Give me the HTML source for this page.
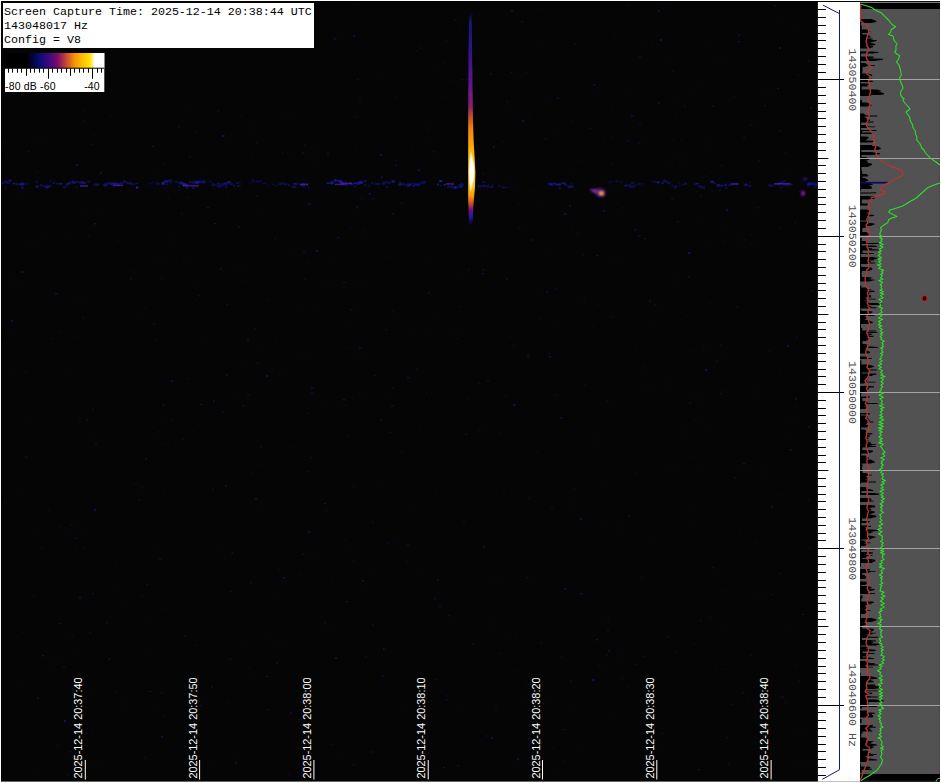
<!DOCTYPE html>
<html lang="en"><head><meta charset="utf-8"><title>Spectrogram capture</title>
<style>html,body{margin:0;padding:0;background:#fff;width:941px;height:783px;overflow:hidden}svg{display:block}.m{font-family:"Liberation Mono","DejaVu Sans Mono",monospace;font-size:11.667px}.s{font-family:"Liberation Sans","DejaVu Sans",sans-serif}</style></head><body>
<svg width="941" height="783" viewBox="0 0 941 783">
<defs>
<linearGradient id="cb" x1="0" y1="0" x2="1" y2="0">
<stop offset="0" stop-color="#000"/><stop offset="0.22" stop-color="#000"/><stop offset="0.28" stop-color="#04043a"/><stop offset="0.35" stop-color="#0a0a7a"/>
<stop offset="0.44" stop-color="#3a0a7a"/><stop offset="0.527" stop-color="#7a0a70"/><stop offset="0.61" stop-color="#c04438"/>
<stop offset="0.70" stop-color="#f89208"/><stop offset="0.78" stop-color="#ffbe00"/><stop offset="0.855" stop-color="#ffe400"/><stop offset="0.885" stop-color="#fff0a0"/><stop offset="0.905" stop-color="#fff"/><stop offset="1" stop-color="#fff"/>
</linearGradient>
<linearGradient id="st" gradientUnits="userSpaceOnUse" x1="0" y1="12" x2="0" y2="228">
<stop offset="0" stop-color="#0a0a40" stop-opacity="0"/>
<stop offset="0.04" stop-color="#16167a"/>
<stop offset="0.17" stop-color="#2a1488"/>
<stop offset="0.32" stop-color="#5a148a"/>
<stop offset="0.44" stop-color="#8a2070"/>
<stop offset="0.49" stop-color="#c8561e"/>
<stop offset="0.54" stop-color="#ee860e"/>
<stop offset="0.62" stop-color="#ffa60c"/>
<stop offset="0.68" stop-color="#ffc41c"/>
<stop offset="0.75" stop-color="#ffd030"/>
<stop offset="0.81" stop-color="#ffc21c"/>
<stop offset="0.85" stop-color="#ff9a08"/>
<stop offset="0.885" stop-color="#d0501e"/>
<stop offset="0.915" stop-color="#6a1488"/>
<stop offset="0.95" stop-color="#20189a"/>
<stop offset="1" stop-color="#0a0a40" stop-opacity="0"/>
</linearGradient>
<radialGradient id="bl"><stop offset="0" stop-color="#ffb010"/><stop offset="0.45" stop-color="#f08018"/><stop offset="0.75" stop-color="#8a1c80"/><stop offset="1" stop-color="#30107a" stop-opacity="0"/></radialGradient>
<radialGradient id="pd"><stop offset="0" stop-color="#b01890"/><stop offset="0.6" stop-color="#6a12a0"/><stop offset="1" stop-color="#20107a" stop-opacity="0"/></radialGradient>
<filter id="b1" x="-50%" y="-5%" width="200%" height="110%"><feGaussianBlur stdDeviation="0.7"/></filter>
<filter id="b2" x="-5%" y="-100%" width="110%" height="300%"><feGaussianBlur stdDeviation="0.75"/></filter>
<filter id="b4" x="0" y="0" width="100%" height="100%"><feGaussianBlur stdDeviation="0.45"/></filter>
<filter id="b3" x="-50%" y="-50%" width="200%" height="200%"><feGaussianBlur stdDeviation="0.8"/></filter>
</defs>
<rect x="0" y="0" width="941" height="783" fill="#fff"/>
<rect x="1" y="1" width="939" height="780.6" fill="#000"/>
<rect x="2.3" y="2" width="815.6" height="778.5" fill="#050505"/>
<path filter="url(#b4)" d="M197 424h2.5v1h-2.5zM604 522h2v1h-2zM83 109h2v2h-2zM437 319h2v1h-2zM517 767h2v1h-2zM652 321h1.5v1.5h-1.5zM350 325h1.5v1h-1.5zM813 243h1.5v1h-1.5zM773 754h2v1.5h-2zM563 760h2v1.5h-2zM353 560h2v2h-2zM643 766h1.5v2h-1.5zM503 492h2v2h-2zM552 748h2.5v1.5h-2.5zM484 251h2v1.5h-2zM618 655h2v2h-2zM409 509h2v1.5h-2zM660 746h2v1.5h-2zM721 352h1.5v1h-1.5zM279 643h2v1.5h-2zM345 404h2.5v1.5h-2.5zM750 124h2.5v2h-2.5zM412 189h2.5v1h-2.5zM765 477h2v1.5h-2zM791 422h2v1.5h-2zM164 417h2v1.5h-2zM645 716h1.5v2h-1.5zM513 670h2v1.5h-2zM266 637h2v1h-2zM794 664h2.5v1.5h-2.5zM316 305h2v1.5h-2zM159 258h2v1h-2zM584 298h2v1h-2zM509 337h2.5v1.5h-2.5zM186 105h2v1.5h-2zM789 436h1.5v2h-1.5zM598 439h1.5v2h-1.5zM120 602h1.5v1h-1.5zM538 294h2v1h-2zM394 542h2v1h-2zM708 143h2v1.5h-2zM302 310h2.5v1h-2.5zM525 697h2v1h-2zM114 585h2v1.5h-2zM694 419h2.5v1.5h-2.5zM724 241h2.5v2h-2.5zM167 444h2v2h-2zM696 191h2v1.5h-2zM156 548h2v1.5h-2zM100 208h1.5v1.5h-1.5zM370 571h1.5v1h-1.5zM445 96h1.5v2h-1.5zM95 689h1.5v1.5h-1.5zM91 733h1.5v2h-1.5zM416 50h2v1.5h-2zM92 436h2.5v1.5h-2.5zM528 357h2v1h-2zM85 213h2v1h-2zM769 350h2v2h-2zM690 91h1.5v1h-1.5zM461 706h2v1.5h-2zM168 197h1.5v2h-1.5zM165 608h1.5v2h-1.5zM382 73h1.5v1.5h-1.5zM699 468h1.5v1.5h-1.5zM812 162h2v2h-2zM570 175h1.5v1h-1.5zM359 356h2v1.5h-2zM692 350h2.5v1.5h-2.5zM789 625h2v1.5h-2zM697 416h2v1h-2zM142 316h1.5v1.5h-1.5zM686 315h2.5v1h-2.5zM404 706h2v1h-2zM319 151h1.5v1.5h-1.5zM799 731h2.5v1.5h-2.5zM459 27h2v1.5h-2zM80 531h1.5v1h-1.5zM48 509h2v2h-2zM279 374h1.5v2h-1.5zM681 431h2v2h-2zM39 137h2.5v1h-2.5zM618 527h2v1.5h-2zM491 623h1.5v2h-1.5zM5 154h2v1.5h-2zM530 190h2v1.5h-2zM478 13h2v1.5h-2zM383 484h1.5v1h-1.5zM700 82h1.5v1h-1.5zM621 677h2.5v2h-2.5zM281 152h2v2h-2zM288 773h2v2h-2zM360 198h2v1.5h-2zM780 18h1.5v1.5h-1.5zM798 680h2v2h-2zM779 227h2.5v1.5h-2.5zM722 627h2v1h-2zM16 490h1.5v1.5h-1.5zM797 31h2v1h-2zM228 702h1.5v2h-1.5zM34 773h2v1.5h-2zM230 134h2.5v1h-2.5zM424 136h1.5v1.5h-1.5zM472 112h2.5v2h-2.5zM260 465h2.5v1.5h-2.5zM231 552h1.5v2h-1.5zM162 715h2.5v2h-2.5zM260 213h2v1.5h-2zM499 433h2v2h-2zM207 761h2.5v1.5h-2.5zM515 635h2v1h-2zM446 40h2.5v1.5h-2.5zM121 703h2.5v2h-2.5zM528 114h2v1.5h-2zM256 505h2v1h-2zM428 121h2.5v1h-2.5zM355 144h2v1h-2zM110 116h2.5v1.5h-2.5zM764 470h1.5v1.5h-1.5zM811 761h1.5v1.5h-1.5zM446 695h2v2h-2zM248 667h2v1.5h-2zM236 758h2v1h-2zM492 175h2v1.5h-2zM356 210h2.5v1.5h-2.5zM195 299h1.5v1.5h-1.5zM739 533h2.5v1.5h-2.5zM28 420h2.5v1.5h-2.5zM675 651h2.5v1.5h-2.5zM671 466h2.5v1h-2.5zM362 586h1.5v1h-1.5zM526 685h2v1.5h-2zM529 744h1.5v1.5h-1.5zM469 70h2.5v2h-2.5zM52 338h2v2h-2zM710 171h2.5v1h-2.5zM756 391h2v1.5h-2zM615 256h2.5v1h-2.5zM196 287h2v1.5h-2zM172 239h2v1.5h-2zM513 345h1.5v2h-1.5zM401 451h2.5v2h-2.5zM810 377h1.5v2h-1.5zM287 117h2.5v1.5h-2.5zM671 161h2v1.5h-2zM347 435h2.5v2h-2.5zM304 144h2v2h-2zM582 254h2v2h-2zM144 308h2.5v1.5h-2.5zM767 94h2.5v1.5h-2.5zM467 398h2v1.5h-2zM84 547h2v2h-2zM675 114h2.5v1.5h-2.5zM796 336h2v2h-2zM353 5h2v1.5h-2zM350 227h2v1.5h-2zM69 529h1.5v1h-1.5zM217 545h1.5v1.5h-1.5zM557 325h1.5v1.5h-1.5zM424 257h1.5v1h-1.5zM512 345h1.5v1.5h-1.5zM163 443h2.5v1.5h-2.5zM427 333h1.5v1.5h-1.5zM647 390h2v1.5h-2zM301 775h1.5v2h-1.5zM13 370h1.5v2h-1.5zM666 383h2v1.5h-2zM785 152h2v2h-2zM59 526h2.5v1.5h-2.5zM610 163h2v2h-2zM779 372h2v1h-2zM541 774h2.5v1.5h-2.5zM325 400h1.5v1h-1.5zM486 735h2v2h-2zM356 116h2.5v2h-2.5zM260 346h2v1h-2zM794 222h2v2h-2zM202 175h2v1h-2zM274 238h2v2h-2zM5 502h2v1.5h-2zM668 59h2v1.5h-2zM239 270h2v1h-2zM470 23h2v1.5h-2zM635 473h2.5v1.5h-2.5zM395 97h2v2h-2zM229 658h2.5v2h-2.5zM64 239h1.5v1.5h-1.5zM146 618h2v1h-2zM183 261h1.5v2h-1.5zM418 728h2v2h-2zM607 483h1.5v1.5h-1.5zM573 503h2v2h-2zM115 567h2v1h-2zM194 131h2.5v2h-2.5zM276 596h2v1.5h-2zM580 160h2v1.5h-2zM4 141h2v2h-2zM551 96h2v1h-2zM700 405h2v1h-2zM717 61h2v1h-2zM388 256h2v1.5h-2zM613 181h2v1.5h-2zM457 274h2.5v1.5h-2.5zM343 286h2v1h-2zM560 656h2v1.5h-2zM153 705h2.5v1h-2.5zM756 541h2v2h-2zM298 573h2v2h-2zM612 316h2.5v2h-2.5zM79 296h2v1.5h-2zM673 279h2.5v2h-2.5zM129 270h2v1.5h-2zM721 590h2v1.5h-2zM204 700h1.5v1h-1.5zM536 451h2v1.5h-2zM456 338h2.5v1.5h-2.5zM704 42h1.5v1.5h-1.5zM163 178h2v1.5h-2zM141 595h2.5v2h-2.5zM721 390h2v1.5h-2zM508 639h1.5v1.5h-1.5zM715 665h2v1.5h-2zM455 333h2v1h-2zM359 392h1.5v2h-1.5zM66 370h2v1.5h-2zM667 636h2.5v2h-2.5zM241 647h2v1h-2zM21 281h1.5v1.5h-1.5zM583 301h2v1.5h-2zM777 494h2v1.5h-2zM144 757h2.5v2h-2.5zM606 400h2.5v2h-2.5zM577 233h2.5v2h-2.5zM21 681h2v1h-2zM639 123h2.5v2h-2.5zM311 556h2v1h-2zM700 195h2v2h-2zM643 40h1.5v1.5h-1.5zM145 650h2v1.5h-2zM306 261h2v2h-2zM73 650h2v1h-2zM711 190h2v1.5h-2zM163 494h2v1h-2zM643 722h2v2h-2zM635 345h2v1.5h-2zM251 157h1.5v2h-1.5zM541 43h2v1h-2zM743 239h2v2h-2zM553 770h2v1.5h-2zM193 760h2v1h-2zM700 222h2.5v1h-2.5zM537 201h1.5v1.5h-1.5zM603 138h1.5v2h-1.5zM528 497h2.5v2h-2.5zM558 133h1.5v1.5h-1.5zM244 280h2v1.5h-2zM129 189h2v1h-2zM411 146h2v1.5h-2zM287 153h2.5v1.5h-2.5zM288 253h1.5v1h-1.5zM672 140h2v1.5h-2zM546 249h2v1.5h-2zM241 364h2v1.5h-2zM673 97h1.5v1.5h-1.5zM628 4h2v2h-2zM327 281h2.5v1.5h-2.5zM695 392h2v1h-2zM416 369h2.5v2h-2.5zM571 228h2.5v1h-2.5zM726 62h2.5v1h-2.5zM31 245h2v1.5h-2zM227 196h2v1h-2zM663 6h2v1.5h-2zM331 580h2v1.5h-2zM250 675h2v1h-2zM693 506h2v1.5h-2zM317 159h2v1.5h-2zM614 37h2v1.5h-2zM478 429h2.5v2h-2.5zM570 707h1.5v2h-1.5zM445 699h1.5v1.5h-1.5zM747 700h1.5v2h-1.5zM797 74h2v2h-2zM36 535h1.5v1.5h-1.5zM705 424h1.5v1.5h-1.5zM495 578h2.5v1h-2.5zM808 499h2.5v2h-2.5zM25 371h2v2h-2zM809 547h2.5v2h-2.5zM22 632h2v1h-2zM435 488h2v1h-2zM416 368h2v2h-2zM67 774h2v2h-2zM789 172h1.5v1.5h-1.5zM256 142h2v2h-2zM419 428h2v1h-2zM327 630h2v1.5h-2zM511 106h1.5v1h-1.5zM252 127h2v2h-2zM332 258h2v1h-2zM44 234h2.5v1h-2.5zM95 766h2v1.5h-2zM157 172h2v1.5h-2zM692 457h2.5v1.5h-2.5zM281 581h2v1.5h-2zM518 203h2.5v1.5h-2.5zM812 61h2v1.5h-2zM240 116h2v1.5h-2zM653 755h2v1.5h-2zM349 545h2v1h-2zM597 87h1.5v2h-1.5zM578 747h1.5v2h-1.5zM340 752h2v1h-2zM446 699h2v2h-2zM76 336h2.5v1.5h-2.5zM13 279h2v2h-2zM83 120h2v2h-2zM234 393h2v1h-2zM438 773h2.5v1h-2.5zM653 541h1.5v1.5h-1.5zM539 317h2v2h-2zM17 192h1.5v1.5h-1.5zM695 527h1.5v1h-1.5zM680 140h2.5v1.5h-2.5zM554 394h2.5v2h-2.5zM75 550h2.5v1h-2.5zM592 325h2.5v1.5h-2.5zM293 446h2v1.5h-2zM409 334h1.5v1.5h-1.5zM348 347h2.5v1.5h-2.5zM627 686h2.5v1.5h-2.5zM750 234h2v1.5h-2zM13 330h2v1h-2zM622 207h2v1.5h-2zM724 226h1.5v1.5h-1.5zM556 289h2v1.5h-2zM799 763h2.5v1h-2.5zM325 509h2v2h-2zM716 360h2.5v2h-2.5zM303 354h2v1.5h-2zM488 184h2v1.5h-2zM538 8h2v1.5h-2zM799 191h1.5v1h-1.5zM420 571h1.5v1.5h-1.5zM353 485h2.5v2h-2.5zM158 431h2v1.5h-2zM609 712h1.5v1.5h-1.5zM759 596h2v1h-2z" fill="#12127a" opacity="0.22"/>
<path filter="url(#b4)" d="M495 706h2v1.5h-2zM159 558h2.5v2h-2.5zM324 622h2v1.5h-2zM635 664h2.5v1.5h-2.5zM785 702h1.5v1.5h-1.5zM55 663h1.5v1.5h-1.5zM310 457h2v1.5h-2zM781 696h2.5v2h-2.5zM709 302h1.5v1.5h-1.5zM796 406h2v1h-2zM290 712h2v2h-2zM89 632h2v1.5h-2zM433 151h2v1.5h-2zM518 228h2.5v1h-2.5zM725 669h2v1h-2zM222 411h1.5v2h-1.5zM306 471h2.5v1h-2.5zM345 540h1.5v1.5h-1.5zM181 213h1.5v2h-1.5zM33 596h2v1h-2zM453 81h1.5v1.5h-1.5zM308 186h2v2h-2zM808 60h1.5v2h-1.5zM705 246h1.5v1h-1.5zM275 341h1.5v1.5h-1.5zM526 577h2.5v1.5h-2.5zM554 288h2v1.5h-2zM91 144h2.5v1.5h-2.5zM463 521h2v1.5h-2zM700 620h2v1.5h-2zM726 737h2v1.5h-2zM628 515h2v2h-2zM505 395h1.5v1.5h-1.5zM407 544h2.5v1.5h-2.5zM530 239h2.5v2h-2.5zM93 134h2v1h-2zM574 43h1.5v2h-1.5zM251 473h1.5v1.5h-1.5zM153 323h2.5v1.5h-2.5zM439 605h2v2h-2zM182 438h2v1.5h-2zM634 229h2.5v2h-2.5zM171 420h2v1h-2zM639 56h2v1.5h-2zM302 152h2.5v2h-2.5zM728 763h1.5v1.5h-1.5zM162 164h2.5v1h-2.5zM88 235h2.5v1h-2.5zM257 362h2v1.5h-2zM774 5h2v1.5h-2zM256 195h2.5v1.5h-2.5zM606 654h2v1.5h-2zM731 704h2.5v1.5h-2.5zM808 426h2v2h-2zM372 624h2v1.5h-2zM693 643h2v1h-2zM546 291h2.5v2h-2.5zM353 764h2v1.5h-2zM380 419h2v2h-2zM679 159h2v1.5h-2zM684 105h1.5v2h-1.5zM502 141h1.5v1.5h-1.5zM709 617h2v1.5h-2zM79 421h2v1.5h-2zM482 173h2v1.5h-2zM434 679h2.5v1h-2.5zM60 332h2v1h-2zM420 47h1.5v2h-1.5zM597 305h2v1h-2zM247 394h2.5v1.5h-2.5zM721 165h2v1.5h-2zM557 97h2v2h-2zM117 241h2v1h-2zM649 300h2v2h-2zM226 304h2.5v1.5h-2.5zM468 269h2v1.5h-2zM506 278h2v2h-2zM146 584h2.5v1.5h-2.5zM184 635h2v2h-2zM278 569h2v1h-2zM703 349h1.5v1.5h-1.5zM395 160h2v1h-2zM86 419h2v2h-2zM810 107h2.5v2h-2.5zM212 489h2v1.5h-2zM654 304h2.5v1.5h-2.5zM178 126h1.5v2h-1.5zM260 446h2v1.5h-2zM82 317h2v1.5h-2zM359 101h2v1.5h-2zM434 598h2v1.5h-2zM71 524h1.5v2h-1.5zM458 306h2v1h-2zM211 686h2v2h-2zM736 306h2v1.5h-2zM189 156h1.5v2h-1.5zM593 84h2.5v2h-2.5zM311 392h2v2h-2zM482 269h2.5v1.5h-2.5zM372 198h2.5v1.5h-2.5zM472 643h2v2h-2zM454 19h2.5v1.5h-2.5zM392 387h1.5v2h-1.5zM138 499h2.5v1.5h-2.5zM607 618h2.5v1h-2.5zM652 42h1.5v1h-1.5zM108 658h2.5v2h-2.5zM200 705h2v1.5h-2zM332 744h2v1h-2zM771 506h2v2h-2zM75 537h2.5v2h-2.5zM5 343h1.5v1.5h-1.5zM638 142h2.5v1.5h-2.5zM390 397h1.5v1h-1.5zM372 521h1.5v2h-1.5zM304 278h2v1.5h-2zM217 110h2.5v1.5h-2.5zM428 292h2v2h-2zM506 101h2v1.5h-2zM743 137h2.5v1.5h-2.5zM428 129h2.5v1h-2.5zM161 278h2.5v1h-2.5zM629 93h1.5v1.5h-1.5zM266 299h2v1h-2zM41 547h2v1.5h-2zM187 378h1.5v1.5h-1.5zM133 483h1.5v1.5h-1.5zM540 685h2v1h-2zM106 622h1.5v2h-1.5zM96 185h2v1h-2zM232 552h1.5v2h-1.5zM478 382h1.5v2h-1.5zM712 567h2v1.5h-2zM162 404h2.5v2h-2.5zM574 488h1.5v1.5h-1.5zM69 751h2.5v1.5h-2.5zM391 405h2.5v2h-2.5zM71 635h2.5v1h-2.5zM392 311h1.5v1.5h-1.5zM370 751h2v2h-2zM205 340h1.5v1h-1.5zM712 105h2v2h-2zM426 392h1.5v1.5h-1.5zM142 487h1.5v1.5h-1.5zM811 290h2v1.5h-2zM569 205h2v2h-2zM570 680h1.5v2h-1.5zM689 402h2.5v1.5h-2.5zM733 96h1.5v1.5h-1.5zM589 128h2.5v1.5h-2.5zM198 295h2v1.5h-2zM25 456h2.5v2h-2.5zM671 198h2.5v1.5h-2.5zM471 201h1.5v1.5h-1.5zM364 231h1.5v1.5h-1.5zM521 21h2.5v1.5h-2.5zM540 642h2.5v1.5h-2.5zM302 553h1.5v2h-1.5zM490 73h2v2h-2zM551 508h2v1.5h-2zM548 353h2.5v1.5h-2.5zM307 413h2v1h-2zM250 582h2v1.5h-2zM757 207h2v1.5h-2zM611 107h1.5v1h-1.5zM389 432h2.5v1h-2.5zM498 653h2.5v1h-2.5zM130 278h2v1.5h-2zM672 70h2v1.5h-2zM771 594h2.5v1h-2.5zM598 665h2.5v1h-2.5zM607 630h2v1.5h-2zM92 409h2v1.5h-2zM542 703h2.5v1.5h-2.5zM401 202h2v1.5h-2zM461 79h2.5v1.5h-2.5zM584 384h1.5v1h-1.5zM719 189h2v2h-2zM571 121h2v1.5h-2zM644 367h1.5v1.5h-1.5zM36 171h2.5v1h-2.5zM466 79h2v1.5h-2zM487 380h2v2h-2zM57 745h2.5v1h-2.5zM178 189h2v1.5h-2zM37 697h2v2h-2zM276 662h2v2h-2zM146 185h1.5v1h-1.5zM230 591h2v1h-2zM627 140h2v1.5h-2zM758 160h2v1.5h-2zM238 226h2v2h-2zM738 34h2v2h-2zM443 62h2.5v1h-2.5zM385 329h2.5v1.5h-2.5zM779 130h2.5v1.5h-2.5zM734 477h1.5v2h-1.5zM448 615h2v1.5h-2zM70 724h1.5v1.5h-1.5zM186 197h2.5v1h-2.5zM406 561h2v1h-2zM720 344h1.5v1.5h-1.5zM525 72h1.5v1.5h-1.5zM350 309h2.5v1.5h-2.5zM63 666h2v2h-2zM359 286h1.5v1h-1.5zM643 656h2v1h-2zM720 393h2v1.5h-2zM254 328h2v1.5h-2zM213 400h2v2h-2zM611 137h2.5v1h-2.5zM220 268h2v2h-2zM641 577h1.5v1.5h-1.5zM437 68h1.5v1h-1.5zM365 656h2v1.5h-2zM374 375h2v1h-2zM164 188h2v1h-2zM196 645h2v1h-2z" fill="#12127a" opacity="0.38"/>
<path filter="url(#b4)" d="M522 120h2v2h-2zM705 369h2.5v2h-2.5zM698 769h2v1.5h-2zM156 340h1.5v1h-1.5zM491 737h2v2h-2zM457 765h2v1h-2zM608 650h2v1.5h-2zM660 39h2v2h-2zM471 14h1.5v1.5h-1.5zM563 729h2.5v1h-2.5zM527 355h2.5v1.5h-2.5zM564 588h2.5v1.5h-2.5zM407 377h2.5v1.5h-2.5zM631 115h2.5v1.5h-2.5zM383 648h1.5v2h-1.5zM742 692h1.5v1.5h-1.5zM149 691h2.5v1h-2.5zM392 213h2v1.5h-2zM517 758h2v2h-2zM28 151h1.5v1h-1.5zM94 223h2v1.5h-2zM266 676h2v1h-2zM335 657h2v2h-2zM743 463h2v1.5h-2zM359 347h2.5v1.5h-2.5zM222 135h2.5v2h-2.5zM382 675h2v1.5h-2zM381 176h1.5v2h-1.5zM592 679h2.5v2h-2.5zM242 405h2.5v1h-2.5zM283 577h2v1.5h-2zM171 380h2v2h-2zM779 573h1.5v1h-1.5zM21 271h2.5v2h-2.5zM483 546h2v1.5h-2zM357 79h1.5v1h-1.5zM267 709h1.5v1.5h-1.5zM235 762h2v1.5h-2zM207 207h2v1h-2zM395 165h2v1.5h-2zM443 767h2v1h-2zM226 374h2v1.5h-2zM356 206h2v1.5h-2zM802 614h2v1h-2zM100 172h1.5v2h-1.5zM513 404h2.5v2h-2.5zM59 623h2.5v1h-2.5zM738 41h2v1.5h-2zM511 72h1.5v1h-1.5zM266 375h2v2h-2zM316 250h2v2h-2zM353 35h2.5v1.5h-2.5zM324 503h2v1h-2zM161 692h1.5v1.5h-1.5zM751 244h1.5v1h-1.5zM346 601h2v1.5h-2zM387 542h1.5v1.5h-1.5zM92 593h1.5v1.5h-1.5zM677 221h2v1h-2zM64 720h2v2h-2zM511 10h2v2h-2zM437 579h2v1.5h-2zM750 654h1.5v1.5h-1.5zM334 38h2.5v1.5h-2.5zM596 639h2v1.5h-2zM337 237h2.5v1h-2.5zM380 154h2v2h-2zM482 273h2v1.5h-2zM152 146h2v1h-2zM790 449h2v1.5h-2zM688 276h1.5v1.5h-1.5zM638 235h2.5v1.5h-2.5zM644 238h2v1h-2zM311 387h2.5v1.5h-2.5zM115 691h1.5v1h-1.5zM369 193h2v1.5h-2zM95 444h2v1h-2zM255 498h2v2h-2zM94 509h2v2h-2zM545 138h1.5v1.5h-1.5zM795 398h2v1.5h-2zM225 485h1.5v2h-1.5zM11 320h2.5v1.5h-2.5zM79 597h2v1.5h-2zM764 105h1.5v1.5h-1.5zM560 417h2v1.5h-2zM658 102h2v1.5h-2zM343 282h2.5v1h-2.5zM580 593h2.5v1.5h-2.5zM779 47h2v2h-2zM308 203h2.5v2h-2.5zM596 255h2.5v1h-2.5zM549 356h2v1.5h-2zM726 209h2v2h-2zM200 404h2v1h-2zM564 213h2.5v2h-2.5zM493 146h1.5v2h-1.5zM308 531h2v2h-2zM327 153h2v1.5h-2zM42 655h2v1.5h-2zM580 518h2v2h-2zM362 580h2v1.5h-2zM214 223h2v1h-2zM193 775h2v1h-2zM777 88h2v1h-2zM658 10h1.5v2h-1.5zM603 210h2v2h-2zM303 251h2.5v1h-2.5zM161 736h2v1.5h-2zM55 293h2.5v1.5h-2.5zM145 458h2v1.5h-2zM661 733h1.5v1h-1.5zM787 345h2v2h-2zM688 252h2.5v2h-2.5zM76 164h2v2h-2zM343 399h2v1.5h-2zM247 339h2v1.5h-2zM465 434h2v1h-2zM418 169h2v2h-2z" fill="#12127a" opacity="0.6"/>
<g filter="url(#b2)"><ellipse cx="3.0" cy="182.9" rx="1.8" ry="1.3" fill="#181890" opacity="0.46"/><ellipse cx="6.0" cy="181.6" rx="1.8" ry="1.3" fill="#1a1aa6" opacity="0.47"/><ellipse cx="5.9" cy="187.6" rx="1.3" ry="1.0" fill="#1818a0" opacity="0.37"/><ellipse cx="8.2" cy="182.5" rx="2.0" ry="1.5" fill="#181890" opacity="0.56"/><ellipse cx="10.1" cy="180.5" rx="1.6" ry="1.2" fill="#1a1aa6" opacity="0.58"/><ellipse cx="14.1" cy="183.5" rx="1.4" ry="1.0" fill="#1a1aa6" opacity="0.72"/><ellipse cx="17.2" cy="184.0" rx="1.6" ry="1.2" fill="#1616a0" opacity="0.58"/><ellipse cx="20.2" cy="184.3" rx="1.5" ry="1.1" fill="#1a1aa6" opacity="0.66"/><ellipse cx="20.8" cy="184.1" rx="1.1" ry="0.8" fill="#1818a0" opacity="0.53"/><ellipse cx="22.4" cy="183.9" rx="2.3" ry="1.6" fill="#181890" opacity="0.76"/><ellipse cx="22.4" cy="187.8" rx="1.6" ry="1.3" fill="#1818a0" opacity="0.61"/><ellipse cx="27.0" cy="183.8" rx="1.4" ry="1.0" fill="#181890" opacity="0.45"/><ellipse cx="27.2" cy="181.0" rx="1.0" ry="0.8" fill="#1818a0" opacity="0.36"/><ellipse cx="37.0" cy="186.6" rx="1.6" ry="1.2" fill="#1a1aa6" opacity="0.71"/><ellipse cx="36.7" cy="181.8" rx="1.2" ry="0.9" fill="#1818a0" opacity="0.57"/><ellipse cx="41.0" cy="184.9" rx="1.6" ry="1.1" fill="#1a1aa6" opacity="0.36"/><ellipse cx="43.2" cy="186.2" rx="1.7" ry="1.2" fill="#1a1aa6" opacity="0.38"/><ellipse cx="47.2" cy="186.9" rx="2.4" ry="1.7" fill="#1a1aa6" opacity="0.70"/><ellipse cx="50.2" cy="185.8" rx="1.7" ry="1.2" fill="#1616a0" opacity="0.42"/><ellipse cx="50.8" cy="181.0" rx="1.2" ry="1.0" fill="#1818a0" opacity="0.34"/><ellipse cx="53.8" cy="182.9" rx="1.3" ry="0.9" fill="#2020b4" opacity="0.42"/><ellipse cx="53.6" cy="182.4" rx="0.9" ry="0.8" fill="#1818a0" opacity="0.34"/><ellipse cx="57.7" cy="183.6" rx="2.0" ry="1.4" fill="#1616a0" opacity="0.38"/><ellipse cx="60.7" cy="183.7" rx="1.8" ry="1.3" fill="#1a1aa6" opacity="0.61"/><ellipse cx="64.6" cy="187.2" rx="1.7" ry="1.2" fill="#2020b4" opacity="0.38"/><ellipse cx="67.5" cy="184.1" rx="1.6" ry="1.1" fill="#2020b4" opacity="0.53"/><ellipse cx="67.2" cy="186.0" rx="1.1" ry="0.9" fill="#1818a0" opacity="0.43"/><ellipse cx="69.6" cy="182.9" rx="2.1" ry="1.5" fill="#2020b4" opacity="0.43"/><ellipse cx="73.4" cy="182.5" rx="1.7" ry="1.2" fill="#1616a0" opacity="0.70"/><ellipse cx="72.6" cy="181.2" rx="1.2" ry="1.0" fill="#1818a0" opacity="0.56"/><ellipse cx="75.3" cy="182.5" rx="1.8" ry="1.3" fill="#1a1aa6" opacity="0.38"/><ellipse cx="77.4" cy="181.9" rx="1.8" ry="1.3" fill="#1616a0" opacity="0.41"/><ellipse cx="76.8" cy="187.0" rx="1.3" ry="1.0" fill="#1818a0" opacity="0.33"/><ellipse cx="81.0" cy="182.4" rx="2.1" ry="1.5" fill="#1a1aa6" opacity="0.56"/><ellipse cx="82.8" cy="182.5" rx="2.1" ry="1.5" fill="#1616a0" opacity="0.39"/><ellipse cx="82.4" cy="185.8" rx="1.5" ry="1.2" fill="#1818a0" opacity="0.31"/><ellipse cx="84.7" cy="183.1" rx="1.7" ry="1.2" fill="#2020b4" opacity="0.44"/><ellipse cx="88.4" cy="181.8" rx="1.9" ry="1.3" fill="#2020b4" opacity="0.34"/><ellipse cx="95.0" cy="184.5" rx="1.8" ry="1.3" fill="#1a1aa6" opacity="0.41"/><ellipse cx="97.6" cy="184.6" rx="2.0" ry="1.4" fill="#1a1aa6" opacity="0.37"/><ellipse cx="105.0" cy="185.0" rx="2.4" ry="1.7" fill="#1a1aa6" opacity="0.59"/><ellipse cx="108.5" cy="183.2" rx="2.2" ry="1.6" fill="#1a1aa6" opacity="0.39"/><ellipse cx="108.0" cy="183.8" rx="1.6" ry="1.3" fill="#1818a0" opacity="0.31"/><ellipse cx="112.0" cy="183.8" rx="2.2" ry="1.6" fill="#181890" opacity="0.69"/><ellipse cx="114.7" cy="183.5" rx="2.3" ry="1.6" fill="#1a1aa6" opacity="0.65"/><ellipse cx="117.7" cy="184.6" rx="2.1" ry="1.5" fill="#181890" opacity="0.76"/><ellipse cx="121.3" cy="183.2" rx="2.0" ry="1.5" fill="#1616a0" opacity="0.67"/><ellipse cx="124.3" cy="181.3" rx="1.6" ry="1.1" fill="#1a1aa6" opacity="0.53"/><ellipse cx="125.1" cy="182.0" rx="1.1" ry="0.9" fill="#1818a0" opacity="0.43"/><ellipse cx="127.9" cy="182.9" rx="1.8" ry="1.3" fill="#181890" opacity="0.64"/><ellipse cx="130.8" cy="183.8" rx="1.4" ry="1.0" fill="#181890" opacity="0.79"/><ellipse cx="131.1" cy="183.0" rx="1.0" ry="0.8" fill="#1818a0" opacity="0.63"/><ellipse cx="134.2" cy="183.7" rx="1.6" ry="1.2" fill="#1616a0" opacity="0.47"/><ellipse cx="137.2" cy="187.1" rx="1.5" ry="1.1" fill="#181890" opacity="0.67"/><ellipse cx="137.0" cy="183.5" rx="1.1" ry="0.9" fill="#1818a0" opacity="0.54"/><ellipse cx="150.0" cy="183.4" rx="2.0" ry="1.4" fill="#1616a0" opacity="0.27"/><ellipse cx="150.9" cy="186.7" rx="1.4" ry="1.1" fill="#1818a0" opacity="0.22"/><ellipse cx="153.5" cy="182.0" rx="1.3" ry="0.9" fill="#1a1aa6" opacity="0.39"/><ellipse cx="153.4" cy="183.9" rx="0.9" ry="0.7" fill="#1818a0" opacity="0.31"/><ellipse cx="157.7" cy="183.4" rx="2.3" ry="1.7" fill="#2020b4" opacity="0.30"/><ellipse cx="163.0" cy="183.3" rx="2.1" ry="1.5" fill="#1a1aa6" opacity="0.73"/><ellipse cx="163.8" cy="183.7" rx="1.5" ry="1.2" fill="#1818a0" opacity="0.58"/><ellipse cx="165.4" cy="181.5" rx="1.9" ry="1.4" fill="#1a1aa6" opacity="0.57"/><ellipse cx="167.4" cy="181.2" rx="1.7" ry="1.2" fill="#1616a0" opacity="0.73"/><ellipse cx="167.4" cy="184.3" rx="1.2" ry="1.0" fill="#1818a0" opacity="0.59"/><ellipse cx="170.4" cy="180.5" rx="2.0" ry="1.4" fill="#1616a0" opacity="0.43"/><ellipse cx="170.7" cy="182.8" rx="1.4" ry="1.2" fill="#1818a0" opacity="0.34"/><ellipse cx="174.4" cy="181.5" rx="1.3" ry="1.0" fill="#1a1aa6" opacity="0.39"/><ellipse cx="176.6" cy="182.3" rx="1.3" ry="0.9" fill="#181890" opacity="0.58"/><ellipse cx="177.5" cy="181.3" rx="0.9" ry="0.7" fill="#1818a0" opacity="0.47"/><ellipse cx="179.7" cy="183.3" rx="1.7" ry="1.2" fill="#181890" opacity="0.67"/><ellipse cx="179.2" cy="186.8" rx="1.2" ry="1.0" fill="#1818a0" opacity="0.54"/><ellipse cx="181.6" cy="182.7" rx="2.0" ry="1.4" fill="#2020b4" opacity="0.44"/><ellipse cx="183.8" cy="184.4" rx="2.2" ry="1.6" fill="#2020b4" opacity="0.72"/><ellipse cx="186.1" cy="184.9" rx="1.9" ry="1.3" fill="#2020b4" opacity="0.77"/><ellipse cx="187.0" cy="187.7" rx="1.3" ry="1.1" fill="#1818a0" opacity="0.62"/><ellipse cx="189.8" cy="181.9" rx="1.3" ry="0.9" fill="#2020b4" opacity="0.52"/><ellipse cx="193.5" cy="182.2" rx="2.3" ry="1.6" fill="#181890" opacity="0.60"/><ellipse cx="193.6" cy="188.1" rx="1.6" ry="1.3" fill="#1818a0" opacity="0.48"/><ellipse cx="197.1" cy="182.2" rx="2.1" ry="1.5" fill="#2020b4" opacity="0.76"/><ellipse cx="199.5" cy="181.9" rx="2.0" ry="1.4" fill="#1616a0" opacity="0.75"/><ellipse cx="203.5" cy="181.9" rx="2.3" ry="1.7" fill="#1616a0" opacity="0.70"/><ellipse cx="210.0" cy="181.4" rx="1.6" ry="1.1" fill="#181890" opacity="0.38"/><ellipse cx="212.9" cy="185.2" rx="1.8" ry="1.3" fill="#1616a0" opacity="0.40"/><ellipse cx="212.7" cy="183.8" rx="1.3" ry="1.0" fill="#1818a0" opacity="0.32"/><ellipse cx="215.9" cy="184.8" rx="1.8" ry="1.3" fill="#2020b4" opacity="0.33"/><ellipse cx="219.6" cy="186.2" rx="2.1" ry="1.5" fill="#1616a0" opacity="0.61"/><ellipse cx="218.6" cy="183.5" rx="1.5" ry="1.2" fill="#1818a0" opacity="0.49"/><ellipse cx="223.0" cy="184.2" rx="2.4" ry="1.7" fill="#1616a0" opacity="0.40"/><ellipse cx="226.1" cy="183.4" rx="2.1" ry="1.5" fill="#1a1aa6" opacity="0.59"/><ellipse cx="226.1" cy="186.8" rx="1.5" ry="1.2" fill="#1818a0" opacity="0.47"/><ellipse cx="229.0" cy="182.2" rx="1.9" ry="1.4" fill="#2020b4" opacity="0.60"/><ellipse cx="231.7" cy="184.0" rx="1.5" ry="1.1" fill="#1a1aa6" opacity="0.63"/><ellipse cx="234.0" cy="185.7" rx="1.3" ry="1.0" fill="#1616a0" opacity="0.44"/><ellipse cx="233.6" cy="186.8" rx="1.0" ry="0.8" fill="#1818a0" opacity="0.35"/><ellipse cx="237.5" cy="183.0" rx="1.6" ry="1.1" fill="#1616a0" opacity="0.41"/><ellipse cx="237.5" cy="186.4" rx="1.1" ry="0.9" fill="#1818a0" opacity="0.33"/><ellipse cx="239.3" cy="185.8" rx="1.8" ry="1.3" fill="#1616a0" opacity="0.32"/><ellipse cx="240.0" cy="182.5" rx="1.3" ry="1.1" fill="#1818a0" opacity="0.26"/><ellipse cx="250.0" cy="182.7" rx="1.9" ry="1.4" fill="#1616a0" opacity="0.23"/><ellipse cx="252.9" cy="180.5" rx="1.7" ry="1.2" fill="#2020b4" opacity="0.25"/><ellipse cx="252.8" cy="183.6" rx="1.2" ry="1.0" fill="#1818a0" opacity="0.20"/><ellipse cx="256.2" cy="181.2" rx="2.1" ry="1.5" fill="#181890" opacity="0.24"/><ellipse cx="258.1" cy="181.2" rx="1.5" ry="1.1" fill="#1a1aa6" opacity="0.24"/><ellipse cx="257.1" cy="181.7" rx="1.1" ry="0.9" fill="#1818a0" opacity="0.19"/><ellipse cx="260.5" cy="181.0" rx="2.0" ry="1.5" fill="#1a1aa6" opacity="0.19"/><ellipse cx="262.8" cy="182.8" rx="1.4" ry="1.0" fill="#1616a0" opacity="0.24"/><ellipse cx="264.9" cy="183.3" rx="1.7" ry="1.2" fill="#1616a0" opacity="0.27"/><ellipse cx="267.2" cy="185.8" rx="1.5" ry="1.1" fill="#1616a0" opacity="0.24"/><ellipse cx="267.8" cy="184.9" rx="1.1" ry="0.9" fill="#1818a0" opacity="0.19"/><ellipse cx="273.0" cy="184.6" rx="1.3" ry="0.9" fill="#2020b4" opacity="0.30"/><ellipse cx="276.4" cy="185.5" rx="1.9" ry="1.4" fill="#181890" opacity="0.23"/><ellipse cx="279.6" cy="184.2" rx="1.5" ry="1.0" fill="#1a1aa6" opacity="0.47"/><ellipse cx="282.1" cy="183.3" rx="2.2" ry="1.6" fill="#2020b4" opacity="0.30"/><ellipse cx="285.4" cy="183.8" rx="1.7" ry="1.2" fill="#1a1aa6" opacity="0.44"/><ellipse cx="285.4" cy="184.9" rx="1.2" ry="1.0" fill="#1818a0" opacity="0.35"/><ellipse cx="289.2" cy="185.3" rx="1.6" ry="1.1" fill="#2020b4" opacity="0.33"/><ellipse cx="292.1" cy="186.6" rx="1.5" ry="1.1" fill="#181890" opacity="0.32"/><ellipse cx="294.1" cy="186.8" rx="2.2" ry="1.6" fill="#1a1aa6" opacity="0.42"/><ellipse cx="295.0" cy="183.7" rx="1.5" ry="1.0" fill="#181890" opacity="0.77"/><ellipse cx="297.2" cy="184.0" rx="2.3" ry="1.7" fill="#1616a0" opacity="0.37"/><ellipse cx="301.3" cy="184.9" rx="1.5" ry="1.1" fill="#181890" opacity="0.52"/><ellipse cx="302.1" cy="185.8" rx="1.1" ry="0.9" fill="#1818a0" opacity="0.42"/><ellipse cx="303.5" cy="184.2" rx="1.7" ry="1.2" fill="#1616a0" opacity="0.77"/><ellipse cx="303.9" cy="186.2" rx="1.2" ry="1.0" fill="#1818a0" opacity="0.61"/><ellipse cx="307.1" cy="184.8" rx="1.3" ry="1.0" fill="#2020b4" opacity="0.39"/><ellipse cx="308.1" cy="183.4" rx="1.0" ry="0.8" fill="#1818a0" opacity="0.31"/><ellipse cx="328.0" cy="183.2" rx="1.6" ry="1.1" fill="#1616a0" opacity="0.80"/><ellipse cx="331.9" cy="182.8" rx="2.3" ry="1.6" fill="#1616a0" opacity="0.81"/><ellipse cx="335.4" cy="180.5" rx="2.0" ry="1.4" fill="#2020b4" opacity="0.62"/><ellipse cx="338.4" cy="180.9" rx="1.3" ry="0.9" fill="#1a1aa6" opacity="0.76"/><ellipse cx="338.4" cy="181.3" rx="0.9" ry="0.8" fill="#1818a0" opacity="0.61"/><ellipse cx="340.4" cy="181.5" rx="1.9" ry="1.4" fill="#2020b4" opacity="0.73"/><ellipse cx="340.9" cy="183.5" rx="1.4" ry="1.1" fill="#1818a0" opacity="0.58"/><ellipse cx="342.5" cy="183.1" rx="1.7" ry="1.2" fill="#2020b4" opacity="0.75"/><ellipse cx="346.5" cy="184.2" rx="1.7" ry="1.2" fill="#2020b4" opacity="0.66"/><ellipse cx="345.6" cy="181.7" rx="1.2" ry="0.9" fill="#1818a0" opacity="0.53"/><ellipse cx="350.2" cy="183.5" rx="1.4" ry="1.0" fill="#1a1aa6" opacity="0.88"/><ellipse cx="349.6" cy="183.1" rx="1.0" ry="0.8" fill="#1818a0" opacity="0.71"/><ellipse cx="352.0" cy="184.0" rx="1.9" ry="1.4" fill="#1616a0" opacity="0.68"/><ellipse cx="355.3" cy="183.3" rx="1.4" ry="1.0" fill="#1a1aa6" opacity="0.78"/><ellipse cx="355.1" cy="186.1" rx="1.0" ry="0.8" fill="#1818a0" opacity="0.62"/><ellipse cx="357.9" cy="183.5" rx="2.2" ry="1.5" fill="#1a1aa6" opacity="0.55"/><ellipse cx="357.5" cy="182.9" rx="1.5" ry="1.2" fill="#1818a0" opacity="0.44"/><ellipse cx="360.7" cy="182.4" rx="2.2" ry="1.6" fill="#1a1aa6" opacity="0.90"/><ellipse cx="364.7" cy="181.0" rx="2.3" ry="1.6" fill="#181890" opacity="0.49"/><ellipse cx="365.0" cy="185.1" rx="1.4" ry="1.0" fill="#181890" opacity="0.45"/><ellipse cx="369.0" cy="186.0" rx="2.0" ry="1.4" fill="#1a1aa6" opacity="0.24"/><ellipse cx="372.1" cy="182.9" rx="2.1" ry="1.5" fill="#1a1aa6" opacity="0.24"/><ellipse cx="376.3" cy="183.9" rx="1.7" ry="1.2" fill="#181890" opacity="0.54"/><ellipse cx="379.2" cy="183.9" rx="1.6" ry="1.1" fill="#1616a0" opacity="0.41"/><ellipse cx="378.5" cy="187.5" rx="1.1" ry="0.9" fill="#1818a0" opacity="0.33"/><ellipse cx="383.2" cy="183.1" rx="2.1" ry="1.5" fill="#1a1aa6" opacity="0.36"/><ellipse cx="384.1" cy="184.4" rx="1.5" ry="1.2" fill="#1818a0" opacity="0.29"/><ellipse cx="386.6" cy="182.1" rx="2.3" ry="1.6" fill="#181890" opacity="0.38"/><ellipse cx="386.9" cy="186.9" rx="1.6" ry="1.3" fill="#1818a0" opacity="0.30"/><ellipse cx="389.5" cy="183.0" rx="1.6" ry="1.2" fill="#181890" opacity="0.42"/><ellipse cx="393.1" cy="181.4" rx="2.0" ry="1.4" fill="#2020b4" opacity="0.52"/><ellipse cx="393.2" cy="181.9" rx="1.4" ry="1.1" fill="#1818a0" opacity="0.41"/><ellipse cx="400.0" cy="184.4" rx="2.2" ry="1.6" fill="#2020b4" opacity="0.45"/><ellipse cx="400.7" cy="182.5" rx="1.6" ry="1.3" fill="#1818a0" opacity="0.36"/><ellipse cx="403.3" cy="184.1" rx="2.0" ry="1.4" fill="#2020b4" opacity="0.32"/><ellipse cx="405.3" cy="184.9" rx="1.3" ry="0.9" fill="#1616a0" opacity="0.55"/><ellipse cx="408.8" cy="184.7" rx="2.4" ry="1.7" fill="#181890" opacity="0.58"/><ellipse cx="408.6" cy="185.8" rx="1.7" ry="1.4" fill="#1818a0" opacity="0.46"/><ellipse cx="410.6" cy="184.3" rx="1.5" ry="1.1" fill="#2020b4" opacity="0.51"/><ellipse cx="413.9" cy="185.5" rx="2.2" ry="1.6" fill="#1616a0" opacity="0.45"/><ellipse cx="413.7" cy="183.3" rx="1.6" ry="1.3" fill="#1818a0" opacity="0.36"/><ellipse cx="416.5" cy="184.7" rx="2.0" ry="1.4" fill="#1616a0" opacity="0.61"/><ellipse cx="418.6" cy="184.8" rx="2.0" ry="1.4" fill="#1616a0" opacity="0.60"/><ellipse cx="420.8" cy="182.9" rx="2.0" ry="1.4" fill="#1a1aa6" opacity="0.31"/><ellipse cx="423.8" cy="182.2" rx="2.2" ry="1.6" fill="#1616a0" opacity="0.49"/><ellipse cx="438.0" cy="184.6" rx="1.4" ry="1.0" fill="#181890" opacity="0.74"/><ellipse cx="440.9" cy="181.0" rx="1.7" ry="1.2" fill="#2020b4" opacity="0.75"/><ellipse cx="441.2" cy="185.6" rx="1.2" ry="1.0" fill="#1818a0" opacity="0.60"/><ellipse cx="444.7" cy="184.9" rx="1.3" ry="0.9" fill="#2020b4" opacity="0.75"/><ellipse cx="448.4" cy="186.9" rx="1.8" ry="1.3" fill="#181890" opacity="0.38"/><ellipse cx="449.2" cy="186.3" rx="1.3" ry="1.0" fill="#1818a0" opacity="0.30"/><ellipse cx="451.6" cy="187.0" rx="1.4" ry="1.0" fill="#181890" opacity="0.70"/><ellipse cx="452.2" cy="185.5" rx="1.0" ry="0.8" fill="#1818a0" opacity="0.56"/><ellipse cx="455.2" cy="187.5" rx="2.3" ry="1.6" fill="#181890" opacity="0.68"/><ellipse cx="455.7" cy="187.4" rx="1.6" ry="1.3" fill="#1818a0" opacity="0.54"/><ellipse cx="458.8" cy="185.7" rx="1.6" ry="1.1" fill="#181890" opacity="0.58"/><ellipse cx="459.2" cy="187.6" rx="1.1" ry="0.9" fill="#1818a0" opacity="0.47"/><ellipse cx="461.6" cy="184.8" rx="2.3" ry="1.6" fill="#1616a0" opacity="0.72"/><ellipse cx="461.2" cy="186.9" rx="1.6" ry="1.3" fill="#1818a0" opacity="0.57"/><ellipse cx="480.0" cy="186.2" rx="2.4" ry="1.7" fill="#1a1aa6" opacity="0.35"/><ellipse cx="484.1" cy="185.9" rx="1.8" ry="1.3" fill="#181890" opacity="0.64"/><ellipse cx="483.6" cy="182.2" rx="1.3" ry="1.0" fill="#1818a0" opacity="0.51"/><ellipse cx="487.8" cy="186.5" rx="2.3" ry="1.6" fill="#181890" opacity="0.40"/><ellipse cx="491.9" cy="187.1" rx="1.8" ry="1.3" fill="#1616a0" opacity="0.52"/><ellipse cx="492.8" cy="185.2" rx="1.3" ry="1.0" fill="#1818a0" opacity="0.41"/><ellipse cx="500.0" cy="185.5" rx="1.5" ry="1.1" fill="#1a1aa6" opacity="0.32"/><ellipse cx="499.1" cy="186.0" rx="1.1" ry="0.9" fill="#1818a0" opacity="0.26"/><ellipse cx="503.2" cy="187.3" rx="1.9" ry="1.4" fill="#1a1aa6" opacity="0.31"/><ellipse cx="505.7" cy="187.5" rx="1.6" ry="1.1" fill="#1a1aa6" opacity="0.36"/><ellipse cx="509.5" cy="187.5" rx="1.5" ry="1.1" fill="#181890" opacity="0.26"/><ellipse cx="510.5" cy="181.0" rx="1.1" ry="0.9" fill="#1818a0" opacity="0.21"/><ellipse cx="513.1" cy="186.7" rx="2.3" ry="1.6" fill="#181890" opacity="0.17"/><ellipse cx="550.0" cy="184.1" rx="2.1" ry="1.5" fill="#1a1aa6" opacity="0.60"/><ellipse cx="552.4" cy="183.9" rx="2.1" ry="1.5" fill="#1a1aa6" opacity="0.44"/><ellipse cx="551.8" cy="185.0" rx="1.5" ry="1.2" fill="#1818a0" opacity="0.35"/><ellipse cx="554.3" cy="183.7" rx="1.6" ry="1.1" fill="#181890" opacity="0.66"/><ellipse cx="556.7" cy="184.4" rx="1.7" ry="1.2" fill="#1a1aa6" opacity="0.58"/><ellipse cx="559.3" cy="184.5" rx="1.8" ry="1.3" fill="#2020b4" opacity="0.63"/><ellipse cx="559.8" cy="187.9" rx="1.3" ry="1.0" fill="#1818a0" opacity="0.51"/><ellipse cx="561.9" cy="183.3" rx="1.3" ry="0.9" fill="#181890" opacity="0.64"/><ellipse cx="564.1" cy="183.3" rx="1.9" ry="1.3" fill="#2020b4" opacity="0.51"/><ellipse cx="566.1" cy="184.7" rx="1.4" ry="1.0" fill="#1616a0" opacity="0.68"/><ellipse cx="569.4" cy="186.8" rx="2.2" ry="1.6" fill="#2020b4" opacity="0.40"/><ellipse cx="572.0" cy="186.5" rx="1.6" ry="1.2" fill="#2020b4" opacity="0.49"/><ellipse cx="571.4" cy="183.4" rx="1.2" ry="0.9" fill="#1818a0" opacity="0.39"/><ellipse cx="608.0" cy="183.1" rx="2.2" ry="1.6" fill="#1a1aa6" opacity="0.17"/><ellipse cx="610.4" cy="181.7" rx="1.9" ry="1.4" fill="#2020b4" opacity="0.18"/><ellipse cx="610.9" cy="184.7" rx="1.4" ry="1.1" fill="#1818a0" opacity="0.14"/><ellipse cx="612.4" cy="182.1" rx="1.3" ry="0.9" fill="#181890" opacity="0.19"/><ellipse cx="615.2" cy="180.5" rx="1.8" ry="1.3" fill="#1616a0" opacity="0.19"/><ellipse cx="615.3" cy="187.1" rx="1.3" ry="1.1" fill="#1818a0" opacity="0.15"/><ellipse cx="617.1" cy="181.2" rx="1.8" ry="1.3" fill="#181890" opacity="0.26"/><ellipse cx="616.4" cy="183.7" rx="1.3" ry="1.0" fill="#1818a0" opacity="0.21"/><ellipse cx="621.1" cy="182.0" rx="2.2" ry="1.6" fill="#2020b4" opacity="0.15"/><ellipse cx="620.8" cy="186.0" rx="1.6" ry="1.2" fill="#1818a0" opacity="0.12"/><ellipse cx="626.0" cy="185.5" rx="1.7" ry="1.2" fill="#181890" opacity="0.52"/><ellipse cx="625.4" cy="185.5" rx="1.2" ry="1.0" fill="#1818a0" opacity="0.42"/><ellipse cx="629.2" cy="185.2" rx="2.2" ry="1.6" fill="#1616a0" opacity="0.31"/><ellipse cx="629.9" cy="187.2" rx="1.6" ry="1.3" fill="#1818a0" opacity="0.25"/><ellipse cx="632.9" cy="186.7" rx="2.2" ry="1.6" fill="#181890" opacity="0.47"/><ellipse cx="632.3" cy="182.9" rx="1.6" ry="1.3" fill="#1818a0" opacity="0.38"/><ellipse cx="635.4" cy="185.3" rx="1.3" ry="0.9" fill="#2020b4" opacity="0.39"/><ellipse cx="639.1" cy="184.4" rx="1.9" ry="1.4" fill="#1a1aa6" opacity="0.29"/><ellipse cx="639.7" cy="183.9" rx="1.4" ry="1.1" fill="#1818a0" opacity="0.23"/><ellipse cx="642.9" cy="183.5" rx="1.3" ry="0.9" fill="#181890" opacity="0.36"/><ellipse cx="642.7" cy="185.2" rx="0.9" ry="0.7" fill="#1818a0" opacity="0.29"/><ellipse cx="652.0" cy="181.6" rx="1.3" ry="0.9" fill="#181890" opacity="0.31"/><ellipse cx="652.0" cy="180.8" rx="0.9" ry="0.7" fill="#1818a0" opacity="0.25"/><ellipse cx="654.8" cy="181.8" rx="2.0" ry="1.4" fill="#1a1aa6" opacity="0.28"/><ellipse cx="658.2" cy="182.2" rx="1.6" ry="1.2" fill="#2020b4" opacity="0.55"/><ellipse cx="662.2" cy="183.0" rx="1.8" ry="1.3" fill="#181890" opacity="0.38"/><ellipse cx="662.6" cy="183.5" rx="1.3" ry="1.0" fill="#1818a0" opacity="0.31"/><ellipse cx="664.6" cy="180.8" rx="1.9" ry="1.3" fill="#2020b4" opacity="0.44"/><ellipse cx="666.5" cy="181.9" rx="1.6" ry="1.1" fill="#181890" opacity="0.45"/><ellipse cx="669.0" cy="183.0" rx="2.1" ry="1.5" fill="#181890" opacity="0.47"/><ellipse cx="672.1" cy="185.6" rx="1.6" ry="1.1" fill="#181890" opacity="0.45"/><ellipse cx="675.9" cy="186.6" rx="1.7" ry="1.2" fill="#1616a0" opacity="0.58"/><ellipse cx="675.0" cy="187.8" rx="1.2" ry="1.0" fill="#1818a0" opacity="0.46"/><ellipse cx="679.9" cy="185.7" rx="1.6" ry="1.1" fill="#181890" opacity="0.32"/><ellipse cx="679.3" cy="183.2" rx="1.1" ry="0.9" fill="#1818a0" opacity="0.26"/><ellipse cx="683.4" cy="184.6" rx="1.4" ry="1.0" fill="#181890" opacity="0.60"/><ellipse cx="685.9" cy="183.8" rx="1.3" ry="0.9" fill="#1a1aa6" opacity="0.56"/><ellipse cx="685.6" cy="182.7" rx="0.9" ry="0.7" fill="#1818a0" opacity="0.45"/><ellipse cx="695.0" cy="184.3" rx="1.3" ry="1.0" fill="#181890" opacity="0.47"/><ellipse cx="697.2" cy="183.8" rx="1.5" ry="1.0" fill="#1616a0" opacity="0.67"/><ellipse cx="697.5" cy="183.7" rx="1.0" ry="0.8" fill="#1818a0" opacity="0.54"/><ellipse cx="699.7" cy="186.4" rx="1.9" ry="1.3" fill="#181890" opacity="0.40"/><ellipse cx="703.1" cy="187.4" rx="2.4" ry="1.7" fill="#181890" opacity="0.41"/><ellipse cx="712.0" cy="181.9" rx="1.9" ry="1.4" fill="#2020b4" opacity="0.66"/><ellipse cx="714.4" cy="183.3" rx="1.4" ry="1.0" fill="#2020b4" opacity="0.41"/><ellipse cx="718.4" cy="185.3" rx="2.1" ry="1.5" fill="#2020b4" opacity="0.54"/><ellipse cx="721.7" cy="185.6" rx="1.5" ry="1.1" fill="#181890" opacity="0.63"/><ellipse cx="722.0" cy="186.0" rx="1.1" ry="0.9" fill="#1818a0" opacity="0.51"/><ellipse cx="725.6" cy="184.9" rx="1.8" ry="1.3" fill="#1616a0" opacity="0.68"/><ellipse cx="726.4" cy="188.0" rx="1.3" ry="1.0" fill="#1818a0" opacity="0.55"/><ellipse cx="730.0" cy="184.9" rx="2.2" ry="1.5" fill="#1616a0" opacity="0.32"/><ellipse cx="732.1" cy="183.9" rx="2.3" ry="1.7" fill="#1616a0" opacity="0.35"/><ellipse cx="736.0" cy="183.7" rx="1.9" ry="1.3" fill="#181890" opacity="0.50"/><ellipse cx="738.0" cy="183.9" rx="1.4" ry="1.0" fill="#181890" opacity="0.29"/><ellipse cx="738.9" cy="184.3" rx="1.0" ry="0.8" fill="#1818a0" opacity="0.23"/><ellipse cx="746.0" cy="185.0" rx="1.9" ry="1.4" fill="#1a1aa6" opacity="0.59"/><ellipse cx="750.0" cy="185.9" rx="1.3" ry="0.9" fill="#1616a0" opacity="0.80"/><ellipse cx="749.7" cy="182.5" rx="0.9" ry="0.7" fill="#1818a0" opacity="0.64"/><ellipse cx="770.0" cy="185.4" rx="2.3" ry="1.6" fill="#181890" opacity="0.38"/><ellipse cx="771.8" cy="185.8" rx="1.3" ry="0.9" fill="#181890" opacity="0.55"/><ellipse cx="773.8" cy="184.7" rx="1.6" ry="1.2" fill="#181890" opacity="0.29"/><ellipse cx="776.3" cy="184.5" rx="1.5" ry="1.1" fill="#1a1aa6" opacity="0.30"/><ellipse cx="775.5" cy="186.7" rx="1.1" ry="0.9" fill="#1818a0" opacity="0.24"/><ellipse cx="779.3" cy="184.0" rx="2.3" ry="1.7" fill="#181890" opacity="0.60"/><ellipse cx="782.1" cy="182.2" rx="1.7" ry="1.2" fill="#1616a0" opacity="0.60"/><ellipse cx="781.3" cy="187.7" rx="1.2" ry="1.0" fill="#1818a0" opacity="0.48"/><ellipse cx="784.3" cy="185.2" rx="2.0" ry="1.4" fill="#1616a0" opacity="0.45"/><ellipse cx="784.8" cy="181.2" rx="1.4" ry="1.1" fill="#1818a0" opacity="0.36"/><ellipse cx="787.2" cy="183.9" rx="2.1" ry="1.5" fill="#1616a0" opacity="0.42"/><ellipse cx="787.7" cy="185.7" rx="1.5" ry="1.2" fill="#1818a0" opacity="0.33"/><ellipse cx="790.9" cy="184.3" rx="1.7" ry="1.2" fill="#1a1aa6" opacity="0.63"/><ellipse cx="809.0" cy="183.9" rx="2.3" ry="1.7" fill="#181890" opacity="0.71"/><ellipse cx="808.1" cy="185.1" rx="1.7" ry="1.3" fill="#1818a0" opacity="0.57"/><ellipse cx="811.9" cy="183.9" rx="2.3" ry="1.7" fill="#1616a0" opacity="0.41"/><ellipse cx="815.4" cy="184.8" rx="2.2" ry="1.6" fill="#181890" opacity="0.44"/><ellipse cx="814.5" cy="187.5" rx="1.6" ry="1.3" fill="#1818a0" opacity="0.35"/><rect x="80" y="185.2" width="8" height="1.5" fill="#5a20b0" opacity="0.7"/><rect x="113" y="184.7" width="10" height="1.5" fill="#5a20b0" opacity="0.7"/><rect x="136" y="187.2" width="2" height="1.5" fill="#5a20b0" opacity="0.7"/><rect x="183" y="185.0" width="16" height="1.5" fill="#5a20b0" opacity="0.7"/><rect x="300" y="183.7" width="8" height="1.5" fill="#5a20b0" opacity="0.7"/><rect x="335" y="183.7" width="10" height="1.5" fill="#5a20b0" opacity="0.7"/><rect x="342" y="182.7" width="10" height="1.5" fill="#5a20b0" opacity="0.7"/><rect x="446" y="183.2" width="8" height="1.5" fill="#5a20b0" opacity="0.7"/><rect x="731" y="183.2" width="7" height="1.5" fill="#5a20b0" opacity="0.7"/><rect x="774" y="183.0" width="16" height="1.5" fill="#5a20b0" opacity="0.7"/></g>
<path filter="url(#b1)" fill="url(#st)" d="M469.2 12 L468.4 60 L468.2 120 L468.2 200 L469.2 228 L472.4 228 L473.4 205 L475.0 187 L475.4 172 L474.6 158 L473.6 140 L473.0 120 L472.2 60 L471.6 12 Z"/>
<g filter="url(#b1)"><path d="M470.8 151 Q466.9 172 470.6 192 Q478.2 172 470.8 151Z" fill="#ffe88a"/><path d="M470.9 155.5 Q467.6 172 470.7 188.5 Q477.2 172 470.9 155.5Z" fill="#fff"/></g>
<g filter="url(#b3)"><path d="M589 189.5 L600 187.5 L606 190 L605 197 L598 197 Z" fill="#48147a" opacity="0.85"/><ellipse cx="596" cy="191.3" rx="5.5" ry="1.3" fill="#8a3a90" opacity="0.85" transform="rotate(16 596 191.3)"/><ellipse cx="601.3" cy="193.3" rx="3.6" ry="2.9" fill="url(#bl)"/><circle cx="601.5" cy="193.3" r="1.8" fill="#ffa414"/></g>
<g filter="url(#b3)"><ellipse cx="803" cy="193.4" rx="2.7" ry="3.6" fill="url(#pd)"/><ellipse cx="805" cy="179" rx="2.5" ry="1.6" fill="#2a1890" opacity="0.9"/><rect x="809" y="182.5" width="8" height="2" fill="#16168a"/></g>
<rect x="3" y="3" width="311" height="45" fill="#fff"/>
<g class="m" fill="#000"><text x="4" y="14.8">Screen Capture Time: 2025-12-14 20:38:44 UTC</text><text x="4" y="28.6">143048017 Hz</text><text x="4" y="42.6">Config = V8</text></g>
<rect x="5" y="53" width="99.3" height="39" fill="#fff"/>
<rect x="5" y="53" width="99.3" height="15.2" fill="url(#cb)"/>
<rect x="5" y="67.7" width="99.3" height="1" fill="#000"/>
<path d="M8.50 68.2v4.5M12.50 68.2v4.5M17.50 68.2v4.5M21.50 68.2v4.5M26.50 68.2v7.6M30.50 68.2v4.5M34.50 68.2v4.5M39.50 68.2v4.5M43.50 68.2v4.5M48.50 68.2v10.5M52.50 68.2v4.5M57.50 68.2v4.5M61.50 68.2v4.5M66.50 68.2v4.5M70.50 68.2v7.6M74.50 68.2v4.5M79.50 68.2v4.5M83.50 68.2v4.5M88.50 68.2v4.5M92.50 68.2v10.5M97.50 68.2v4.5M101.50 68.2v4.5" stroke="#000" stroke-width="1" fill="none"/>
<g class="s" font-size="10.5px" letter-spacing="0.17" fill="#000"><text x="5" y="89.8">-80 dB -60</text><text x="84.2" y="89.8">-40</text></g>
<rect x="84.8" y="760" width="1" height="19.5" fill="#fff"/>
<text class="s" font-size="10.9px" fill="#fff" transform="translate(82.3 778.6) rotate(-90)">2025-12-14 20:37:40</text>
<rect x="199.1" y="760" width="1" height="19.5" fill="#fff"/>
<text class="s" font-size="10.9px" fill="#fff" transform="translate(196.6 778.6) rotate(-90)">2025-12-14 20:37:50</text>
<rect x="313.4" y="760" width="1" height="19.5" fill="#fff"/>
<text class="s" font-size="10.9px" fill="#fff" transform="translate(310.9 778.6) rotate(-90)">2025-12-14 20:38:00</text>
<rect x="427.7" y="760" width="1" height="19.5" fill="#fff"/>
<text class="s" font-size="10.9px" fill="#fff" transform="translate(425.2 778.6) rotate(-90)">2025-12-14 20:38:10</text>
<rect x="542.0" y="760" width="1" height="19.5" fill="#fff"/>
<text class="s" font-size="10.9px" fill="#fff" transform="translate(539.5 778.6) rotate(-90)">2025-12-14 20:38:20</text>
<rect x="656.3" y="760" width="1" height="19.5" fill="#fff"/>
<text class="s" font-size="10.9px" fill="#fff" transform="translate(653.8 778.6) rotate(-90)">2025-12-14 20:38:30</text>
<rect x="770.6" y="760" width="1" height="19.5" fill="#fff"/>
<text class="s" font-size="10.9px" fill="#fff" transform="translate(768.1 778.6) rotate(-90)">2025-12-14 20:38:40</text>
<rect x="817.9" y="2" width="42.2" height="779.6" fill="#fff"/>
<path d="M817.9 1.50h10.5M817.9 9.50h8M817.9 17.50h8M817.9 25.50h8M817.9 33.50h8M817.9 40.50h8M817.9 48.50h8M817.9 56.50h8M817.9 64.50h8M817.9 72.50h8M817.9 79.50h26.2M817.9 87.50h8M817.9 95.50h8M817.9 103.50h8M817.9 111.50h8M817.9 118.50h8M817.9 126.50h8M817.9 134.50h8M817.9 142.50h8M817.9 150.50h8M817.9 158.50h10.5M817.9 165.50h8M817.9 173.50h8M817.9 181.50h8M817.9 189.50h8M817.9 197.50h8M817.9 204.50h8M817.9 212.50h8M817.9 220.50h8M817.9 228.50h8M817.9 236.50h26.2M817.9 244.50h8M817.9 251.50h8M817.9 259.50h8M817.9 267.50h8M817.9 275.50h8M817.9 283.50h8M817.9 290.50h8M817.9 298.50h8M817.9 306.50h8M817.9 314.50h10.5M817.9 322.50h8M817.9 329.50h8M817.9 337.50h8M817.9 345.50h8M817.9 353.50h8M817.9 361.50h8M817.9 369.50h8M817.9 376.50h8M817.9 384.50h8M817.9 392.50h26.2M817.9 400.50h8M817.9 408.50h8M817.9 415.50h8M817.9 423.50h8M817.9 431.50h8M817.9 439.50h8M817.9 447.50h8M817.9 455.50h8M817.9 462.50h8M817.9 470.50h10.5M817.9 478.50h8M817.9 486.50h8M817.9 494.50h8M817.9 501.50h8M817.9 509.50h8M817.9 517.50h8M817.9 525.50h8M817.9 533.50h8M817.9 540.50h8M817.9 548.50h26.2M817.9 556.50h8M817.9 564.50h8M817.9 572.50h8M817.9 580.50h8M817.9 587.50h8M817.9 595.50h8M817.9 603.50h8M817.9 611.50h8M817.9 619.50h8M817.9 626.50h10.5M817.9 634.50h8M817.9 642.50h8M817.9 650.50h8M817.9 658.50h8M817.9 666.50h8M817.9 673.50h8M817.9 681.50h8M817.9 689.50h8M817.9 697.50h8M817.9 705.50h26.2M817.9 712.50h8M817.9 720.50h8M817.9 728.50h8M817.9 736.50h8M817.9 744.50h8M817.9 751.50h8M817.9 759.50h8M817.9 767.50h8M817.9 775.50h8" stroke="#000" stroke-width="1" fill="none"/>
<path d="M823 5.2 L839.5 13.6 M839.5 10 V769.7 L822.3 779.3" stroke="#14148c" stroke-width="1" fill="none"/>
<text class="m" fill="#505050" text-anchor="middle" transform="translate(848.6 79.9) rotate(90)">143050400</text>
<text class="m" fill="#505050" text-anchor="middle" transform="translate(848.6 236.2) rotate(90)">143050200</text>
<text class="m" fill="#505050" text-anchor="middle" transform="translate(848.6 392.5) rotate(90)">143050000</text>
<text class="m" fill="#505050" text-anchor="middle" transform="translate(848.6 548.8) rotate(90)">143049800</text>
<text class="m" fill="#505050" text-anchor="middle" transform="translate(848.6 705.1) rotate(90)">143049600 Hz</text>
<rect x="860.1" y="2" width="79.8" height="779.6" fill="#525252"/>
<rect x="860.1" y="1" width="79.8" height="1.2" fill="#000"/>
<rect x="860.1" y="3" width="79.8" height="6" fill="#000"/>
<rect x="860.1" y="774" width="79.8" height="6.8" fill="#000"/>
<rect x="860.1" y="780.8" width="79.8" height="0.8" fill="#000"/>
<rect x="860.1" y="1.9" width="79.8" height="0.9" fill="#8a8a8a"/>
<path d="M860.1 19.0h11.3L876.4 21.1v1L871.4 23.0H860.1zM860.1 23.0h0.8v2.5H860.1zM860.1 25.5h1.6v4H860.1zM860.1 29.5h6.8L869.3 31.0v1L866.9 33.0H860.1zM860.1 30.9h10.1v0.9H860.1zM860.1 33.0h2.2v1.5H860.1zM860.1 34.5h6.0L869.5 35.5v1L866.1 38.5H860.1zM860.1 36.5h10.7v0.9H860.1zM860.1 38.5h7.8L872.6 38.6v1L867.9 40.0H860.1zM860.1 39.0h10.6v0.9H860.1zM860.1 40.0h10.1L876.6 40.1v1L870.2 42.5H860.1zM860.1 42.5h9.2L875.2 43.9v1L869.3 46.0H860.1zM860.1 46.0h8.1L873.1 46.3v1L868.2 48.5H860.1zM860.1 47.3h10.5v0.9H860.1zM860.1 51.5h12.2L878.4 51.9v1L872.3 53.5H860.1zM860.1 53.5h0.8v3H860.1zM860.1 56.5h7.3L873.1 57.1v1L867.4 58.5H860.1zM860.1 56.5h13.5v0.9H860.1zM860.1 58.5h14.0L882.9 58.7v1L874.1 61.0H860.1zM860.1 61.0h0.9v2H860.1zM860.1 63.0h4.8L867.6 64.8v1L864.9 67.0H860.1zM860.1 65.2h14.9v0.9H860.1zM860.1 67.0h2.4v4H860.1zM860.1 71.0h2.2v2.5H860.1zM860.1 73.5h7.6L872.2 74.8v1L867.7 77.0H860.1zM860.1 77.0h7.1L869.4 77.7v1L867.2 80.5H860.1zM860.1 78.5h11.8v0.9H860.1zM860.1 80.5h7.7L872.7 81.1v1L867.8 82.0H860.1zM860.1 80.8h12.2v0.9H860.1zM860.1 82.0h0.7v1.5H860.1zM860.1 83.5h6.6L868.6 83.8v1L866.7 85.5H860.1zM860.1 85.5h5.0L867.7 85.5v1L865.1 86.5H860.1zM860.1 86.5h1.6v3H860.1zM860.1 89.5h16.9L880.7 90.5v1L877.0 92.0H860.1zM860.1 92.0h19.7L884.1 93.3v1L879.8 95.0H860.1zM860.1 95.0h7.7L870.8 94.9v1L867.8 96.0H860.1zM860.1 100.0h1.8v2.5H860.1zM860.1 102.5h6.6L871.5 104.7v1L866.7 106.5H860.1zM860.1 113.5h3.7L866.1 115.4v1L863.8 117.5H860.1zM860.1 115.5h17.2v0.9H860.1zM860.1 117.5h4.2L866.9 118.2v1L864.3 119.5H860.1zM860.1 119.5h5.9L870.1 119.8v1L866.0 121.5H860.1zM860.1 121.5h6.1L869.8 121.7v1L866.2 122.5H860.1zM860.1 121.5h13.6v0.9H860.1zM860.1 122.5h1.0v2.5H860.1zM860.1 125.0h6.6L868.3 125.7v1L866.7 128.0H860.1zM860.1 126.4h14.9v0.9H860.1zM860.1 128.0h0.8v2H860.1zM860.1 130.0h9.9L876.4 130.0v1L870.0 131.0H860.1zM860.1 131.0h2.0v1.5H860.1zM860.1 132.5h11.2L873.4 133.0v1L871.3 134.0H860.1zM860.1 134.0h0.6v2.5H860.1zM860.1 136.5h5.3L868.7 137.1v1L865.4 140.5H860.1zM860.1 140.5h11.3L873.7 140.6v1L871.4 142.5H860.1zM860.1 145.0h9.8L872.1 145.0v1L869.9 146.0H860.1zM860.1 146.0h17.0L880.7 148.1v1L877.1 150.0H860.1zM860.1 147.2h11.9v0.9H860.1zM860.1 150.0h1.3v2H860.1zM860.1 152.0h11.0L880.0 153.3v1L871.1 155.0H860.1zM860.1 155.0h1.4v2H860.1zM860.1 157.0h5.3L869.5 158.4v1L865.4 161.0H860.1zM860.1 161.0h6.5L868.0 162.0v1L866.6 163.0H860.1zM860.1 163.0h7.4L872.1 163.7v1L867.5 167.0H860.1zM860.1 167.0h1.4v4H860.1zM860.1 171.0h2.1v3H860.1zM860.1 174.0h6.6L868.2 175.3v1L866.7 176.5H860.1zM860.1 176.5h2.4v1.5H860.1zM860.1 178.0h4.5L868.2 179.7v1L864.6 182.0H860.1zM860.1 182.0h7.3L872.6 184.1v1L867.4 185.5H860.1zM860.1 184.4h11.3v0.9H860.1zM860.1 185.5h9.8L872.0 187.3v1L869.9 189.0H860.1zM860.1 189.0h1.0v1.5H860.1zM860.1 192.5h10.1L876.1 192.3v1L870.2 193.5H860.1zM860.1 196.0h8.6L870.7 196.4v1L868.7 197.5H860.1zM860.1 196.5h15.1v0.9H860.1zM860.1 197.5h7.5L872.3 198.0v1L867.6 199.5H860.1zM860.1 198.1h14.3v0.9H860.1zM860.1 199.5h1.6v4H860.1zM860.1 203.5h6.7L868.0 203.7v1L866.8 205.5H860.1zM860.1 209.5h6.3L870.5 211.1v1L866.4 213.0H860.1zM860.1 213.0h5.0L868.6 213.6v1L865.1 214.5H860.1zM860.1 214.5h7.8L874.0 215.0v1L867.9 216.5H860.1zM860.1 216.5h6.9L868.2 218.7v1L867.0 220.5H860.1zM860.1 221.5h6.1L868.9 221.6v1L866.2 223.0H860.1zM860.1 223.0h10.0L874.6 223.5v1L870.1 226.0H860.1zM860.1 226.0h5.3L866.8 226.1v1L865.4 228.0H860.1zM860.1 228.0h2.2v4H860.1zM860.1 232.0h7.2L869.3 233.0v1L867.3 235.5H860.1zM860.1 233.9h10.9v0.9H860.1zM860.1 238.0h1.7v3H860.1zM860.1 241.0h4.3L867.6 241.7v1L864.4 243.0H860.1zM860.1 243.0h11.9L878.9 242.8v1L872.0 244.0H860.1zM860.1 244.0h1.6v1.5H860.1zM860.1 245.5h12.5L877.0 246.1v1L872.6 247.0H860.1zM860.1 247.0h5.6L868.1 247.0v1L865.7 248.0H860.1zM860.1 248.0h8.6L872.1 248.2v1L868.7 249.0H860.1zM860.1 249.0h10.4L878.6 249.4v1L870.5 250.5H860.1zM860.1 250.5h2.4v2.5H860.1zM860.1 253.0h8.7L873.7 253.0v1L868.8 254.0H860.1zM860.1 254.0h0.7v3H860.1zM860.1 257.0h13.0L877.7 257.9v1L873.1 259.5H860.1zM860.1 259.5h7.8L873.9 259.6v1L867.9 260.5H860.1zM860.1 260.5h5.6L867.3 260.6v1L865.7 262.0H860.1zM860.1 261.0h10.8v0.9H860.1zM860.1 262.0h7.1L869.8 262.8v1L867.2 264.0H860.1zM860.1 262.5h15.0v0.9H860.1zM860.1 264.0h0.9v1H860.1zM860.1 265.0h1.1v2H860.1zM860.1 267.0h9.5L872.4 268.2v1L869.6 271.0H860.1zM860.1 271.0h1.8v2H860.1zM860.1 273.0h1.3v1H860.1zM860.1 274.0h1.6v3H860.1zM860.1 277.0h8.1L870.8 278.0v1L868.2 279.5H860.1zM860.1 277.4h12.2v0.9H860.1zM860.1 279.5h8.5L871.6 279.9v1L868.6 281.5H860.1zM860.1 279.6h14.3v0.9H860.1zM860.1 285.5h1.2v2H860.1zM860.1 287.5h5.7L867.2 288.9v1L865.8 290.5H860.1zM860.1 289.2h11.0v0.9H860.1zM860.1 290.5h8.7L874.7 290.7v1L868.8 292.5H860.1zM860.1 292.5h7.5L869.2 293.6v1L867.6 295.0H860.1zM860.1 295.0h7.7L870.8 295.2v1L867.8 296.5H860.1zM860.1 296.5h6.4L871.3 296.6v1L866.5 297.5H860.1zM860.1 297.5h4.4L866.7 298.8v1L864.5 300.5H860.1zM860.1 298.7h15.7v0.9H860.1zM860.1 300.5h5.8L869.1 301.6v1L865.9 303.0H860.1zM860.1 303.0h16.8L881.4 303.6v1L876.9 305.0H860.1zM860.1 305.0h8.1L871.3 306.8v1L868.2 308.5H860.1zM860.1 307.3h16.1v0.9H860.1zM860.1 309.5h1.4v1.5H860.1zM860.1 311.0h7.1L872.5 311.5v1L867.2 314.5H860.1zM860.1 314.5h11.9L875.1 314.4v1L872.0 316.0H860.1zM860.1 316.0h4.3L866.7 317.3v1L864.4 320.0H860.1zM860.1 320.0h7.2L872.7 322.1v1L867.3 324.0H860.1zM860.1 324.0h0.9v4H860.1zM860.1 328.0h2.1v2.5H860.1zM860.1 330.5h9.8L874.7 330.5v1L869.9 331.5H860.1zM860.1 330.6h15.9v0.9H860.1zM860.1 331.5h5.2L867.4 331.9v1L865.3 333.5H860.1zM860.1 332.0h17.1v0.9H860.1zM860.1 333.5h8.0L871.8 333.7v1L868.1 336.0H860.1zM860.1 336.0h9.0L873.7 335.8v1L869.1 337.0H860.1zM860.1 337.0h5.6L869.3 338.1v1L865.7 341.0H860.1zM860.1 341.0h2.4v3H860.1zM860.1 344.0h6.9L868.3 344.6v1L867.0 346.5H860.1zM860.1 346.5h11.7L877.7 347.0v1L871.8 348.0H860.1zM860.1 348.0h5.3L866.5 348.2v1L865.4 350.5H860.1zM860.1 350.5h6.7L870.0 352.1v1L866.8 353.5H860.1zM860.1 356.5h5.3L867.4 356.7v1L865.4 359.0H860.1zM860.1 358.0h11.6v0.9H860.1zM860.1 360.5h1.3v4H860.1zM860.1 364.5h7.7L874.0 366.0v1L867.8 368.5H860.1zM860.1 366.6h11.5v0.9H860.1zM860.1 368.5h7.5L870.6 370.1v1L867.6 372.5H860.1zM860.1 369.5h16.7v0.9H860.1zM860.1 372.5h1.4v1H860.1zM860.1 373.5h13.7L876.4 373.7v1L873.8 375.0H860.1zM860.1 375.0h8.6L872.6 375.1v1L868.7 376.0H860.1zM860.1 375.1h10.9v0.9H860.1zM860.1 376.0h6.6L868.7 376.9v1L866.7 378.0H860.1zM860.1 378.0h6.0L867.9 378.0v1L866.1 379.5H860.1zM860.1 379.5h4.0L866.9 380.2v1L864.1 383.5H860.1zM860.1 381.7h15.4v0.9H860.1zM860.1 386.0h9.5L874.1 386.6v1L869.6 387.5H860.1zM860.1 387.5h6.6L868.8 388.1v1L866.7 391.0H860.1zM860.1 391.0h4.7L867.4 391.1v1L864.8 392.0H860.1zM860.1 392.0h1.3v3H860.1zM860.1 395.0h0.9v1.5H860.1zM860.1 396.5h5.5L869.6 396.6v1L865.6 398.0H860.1zM860.1 398.0h2.3v3H860.1zM860.1 401.0h5.3L867.4 402.0v1L865.4 404.0H860.1zM860.1 403.1h17.5v0.9H860.1zM860.1 404.0h4.2L867.3 404.8v1L864.3 406.0H860.1zM860.1 406.0h4.3L866.6 407.6v1L864.4 409.0H860.1zM860.1 413.0h8.0L870.1 413.6v1L868.1 414.5H860.1zM860.1 414.5h0.7v1H860.1zM860.1 415.5h4.6L867.7 415.9v1L864.7 417.5H860.1zM860.1 417.5h7.0L869.5 419.9v1L867.1 421.5H860.1zM860.1 421.5h5.2L866.8 423.0v1L865.3 425.0H860.1zM860.1 421.6h13.3v0.9H860.1zM860.1 425.0h6.5L869.2 425.1v1L866.6 426.5H860.1zM860.1 426.5h5.0L867.5 426.6v1L865.1 427.5H860.1zM860.1 427.5h1.0v2H860.1zM860.1 429.5h4.9L866.2 431.3v1L865.0 433.0H860.1zM860.1 433.0h8.7L872.4 433.3v1L868.8 434.5H860.1zM860.1 434.5h6.5L869.9 435.4v1L866.6 437.5H860.1zM860.1 437.5h5.3L868.6 438.0v1L865.4 439.0H860.1zM860.1 439.0h5.5L868.4 440.1v1L865.6 443.0H860.1zM860.1 441.8h10.5v0.9H860.1zM860.1 443.0h9.8L872.4 443.9v1L869.9 446.0H860.1zM860.1 444.2h16.0v0.9H860.1zM860.1 446.0h6.1L869.0 446.3v1L866.2 447.5H860.1zM860.1 446.0h15.8v0.9H860.1zM860.1 447.5h2.2v2.5H860.1zM860.1 450.0h8.2L872.9 450.8v1L868.3 453.5H860.1zM860.1 453.5h1.2v2H860.1zM860.1 455.5h4.9L868.8 457.4v1L865.0 459.5H860.1zM860.1 459.5h10.6L874.8 461.4v1L870.7 463.5H860.1zM860.1 463.5h1.6v1H860.1zM860.1 464.5h2.4v2H860.1zM860.1 466.5h1.8v2.5H860.1zM860.1 469.0h2.4v4H860.1zM860.1 473.0h5.7L869.5 474.6v1L865.8 476.5H860.1zM860.1 474.7h11.9v0.9H860.1zM860.1 476.5h4.6L868.0 477.5v1L864.7 479.5H860.1zM860.1 479.5h6.9L868.3 479.6v1L867.0 481.5H860.1zM860.1 481.5h10.7L875.9 481.5v1L870.8 482.5H860.1zM860.1 482.5h0.6v1.5H860.1zM860.1 487.0h4.9L867.5 487.8v1L865.0 489.0H860.1zM860.1 489.0h8.4L873.1 489.9v1L868.5 491.0H860.1zM860.1 491.0h1.3v2H860.1zM860.1 493.0h13.6L879.1 493.7v1L873.7 495.0H860.1zM860.1 493.8h15.7v0.9H860.1zM860.1 498.0h9.5L871.4 498.9v1L869.6 502.0H860.1zM860.1 500.7h13.6v0.9H860.1zM860.1 505.0h8.7L874.9 505.4v1L868.8 508.5H860.1zM860.1 506.5h15.1v0.9H860.1zM860.1 508.5h9.0L871.4 509.2v1L869.1 510.5H860.1zM860.1 510.5h8.8L874.8 511.5v1L868.9 514.5H860.1zM860.1 514.5h10.1L876.5 515.7v1L870.2 518.5H860.1zM860.1 518.5h1.9v2.5H860.1zM860.1 521.0h6.1L869.8 521.0v1L866.2 523.0H860.1zM860.1 523.0h1.4v2.5H860.1zM860.1 525.5h8.2L870.9 525.9v1L868.3 527.0H860.1zM860.1 527.0h5.1L866.2 527.7v1L865.2 529.5H860.1zM860.1 529.5h10.2L878.1 530.1v1L870.3 531.5H860.1zM860.1 531.5h8.9L871.4 531.9v1L869.0 533.5H860.1zM860.1 531.7h12.8v0.9H860.1zM860.1 533.5h5.3L867.4 533.9v1L865.4 535.5H860.1zM860.1 535.5h9.5L874.4 536.4v1L869.6 539.5H860.1zM860.1 536.6h15.5v0.9H860.1zM860.1 539.5h1.3v1H860.1zM860.1 540.5h3.9L866.4 542.0v1L864.0 544.0H860.1zM860.1 542.4h10.5v0.9H860.1zM860.1 544.0h4.4L867.0 544.0v1L864.5 546.0H860.1zM860.1 546.0h0.8v2.5H860.1zM860.1 548.5h10.3L874.9 548.6v1L870.4 549.5H860.1zM860.1 548.5h14.1v0.9H860.1zM860.1 549.5h1.1v2.5H860.1zM860.1 552.0h8.5L873.0 552.5v1L868.6 554.0H860.1zM860.1 554.0h5.5L866.8 555.3v1L865.6 558.0H860.1zM860.1 555.1h12.3v0.9H860.1zM860.1 558.0h2.1v1H860.1zM860.1 559.0h11.4L875.3 560.1v1L871.5 563.0H860.1zM860.1 563.0h0.9v4H860.1zM860.1 569.0h7.0L870.1 569.0v1L867.1 570.5H860.1zM860.1 570.5h7.2L870.6 571.1v1L867.3 573.0H860.1zM860.1 570.9h15.3v0.9H860.1zM860.1 573.0h2.3v2H860.1zM860.1 575.0h4.4L866.2 576.9v1L864.5 579.0H860.1zM860.1 581.5h5.2L866.8 582.4v1L865.3 585.0H860.1zM860.1 585.0h0.9v1H860.1zM860.1 586.0h6.8L871.4 587.0v1L866.9 588.5H860.1zM860.1 588.5h8.2L874.6 588.9v1L868.3 591.5H860.1zM860.1 591.5h6.2L867.8 592.0v1L866.3 593.0H860.1zM860.1 593.0h6.1L868.9 593.0v1L866.2 594.0H860.1zM860.1 593.0h14.8v0.9H860.1zM860.1 595.5h2.4v3H860.1zM860.1 598.5h1.2v3H860.1zM860.1 601.5h11.1L874.0 601.8v1L871.2 603.0H860.1zM860.1 603.0h4.6L867.0 603.6v1L864.7 606.0H860.1zM860.1 603.3h11.5v0.9H860.1zM860.1 606.0h4.5L866.8 607.1v1L864.6 610.0H860.1zM860.1 610.0h4.5L866.4 610.9v1L864.6 614.0H860.1zM860.1 610.2h10.5v0.9H860.1zM860.1 614.0h0.8v4H860.1zM860.1 618.0h11.3L876.4 619.3v1L871.4 622.0H860.1zM860.1 622.0h3.7L866.2 623.6v1L863.8 625.5H860.1zM860.1 625.5h2.1v3H860.1zM860.1 628.5h10.7L873.9 629.1v1L870.8 632.0H860.1zM860.1 629.0h11.3v0.9H860.1zM860.1 632.0h10.4L872.4 633.3v1L870.5 634.5H860.1zM860.1 632.7h15.5v0.9H860.1zM860.1 634.5h5.6L869.6 636.1v1L865.7 638.0H860.1zM860.1 636.8h18.0v0.9H860.1zM860.1 638.0h1.8v2H860.1zM860.1 640.0h9.5L875.9 640.5v1L869.6 641.5H860.1zM860.1 640.5h13.5v0.9H860.1zM860.1 641.5h9.9L872.8 642.1v1L870.0 643.5H860.1zM860.1 643.5h16.1L879.4 643.6v1L876.2 645.5H860.1zM860.1 643.6h13.9v0.9H860.1zM860.1 645.5h0.7v1H860.1zM860.1 646.5h5.4L868.9 647.0v1L865.5 649.0H860.1zM860.1 649.0h8.7L875.8 650.0v1L868.8 651.5H860.1zM860.1 651.5h2.5v1.5H860.1zM860.1 653.0h4.8L867.2 653.2v1L864.9 654.0H860.1zM860.1 653.1h14.4v0.9H860.1zM860.1 654.0h5.6L867.8 655.1v1L865.7 656.5H860.1zM860.1 656.5h2.4v1H860.1zM860.1 657.5h7.3L870.3 657.4v1L867.4 659.0H860.1zM860.1 658.0h13.7v0.9H860.1zM860.1 661.0h6.7L868.5 661.8v1L866.8 663.0H860.1zM860.1 663.0h11.8L874.8 663.2v1L871.9 664.5H860.1zM860.1 664.5h6.3L869.1 664.6v1L866.4 665.5H860.1zM860.1 664.6h17.9v0.9H860.1zM860.1 665.5h4.0L866.3 666.8v1L864.1 668.0H860.1zM860.1 666.7h12.7v0.9H860.1zM860.1 673.5h0.9v1.5H860.1zM860.1 676.0h9.6L877.3 677.7v1L869.7 679.5H860.1zM860.1 677.5h10.5v0.9H860.1zM860.1 679.5h8.4L873.7 681.2v1L868.5 682.5H860.1zM860.1 682.5h5.5L866.9 683.4v1L865.6 684.5H860.1zM860.1 684.5h10.5L874.2 684.4v1L870.6 685.5H860.1zM860.1 684.6h14.9v0.9H860.1zM860.1 685.5h13.9L880.4 687.1v1L874.0 689.0H860.1zM860.1 689.0h4.4L866.3 690.0v1L864.5 692.5H860.1zM860.1 690.4h17.4v0.9H860.1zM860.1 692.5h8.4L872.3 692.8v1L868.5 695.0H860.1zM860.1 695.0h7.2L870.2 696.0v1L867.3 698.0H860.1zM860.1 696.6h17.7v0.9H860.1zM860.1 698.0h5.6L867.1 698.6v1L865.7 699.5H860.1zM860.1 699.5h14.9L883.9 700.5v1L875.0 702.0H860.1zM860.1 702.0h4.8L868.5 702.1v1L864.9 703.0H860.1zM860.1 703.0h6.1L868.8 703.6v1L866.2 707.0H860.1zM860.1 706.0h17.0v0.9H860.1zM860.1 707.0h2.0v1.5H860.1zM860.1 710.5h5.9L867.5 710.9v1L866.0 712.5H860.1zM860.1 712.5h9.4L874.7 712.8v1L869.5 714.0H860.1zM860.1 714.0h11.1L873.4 715.9v1L871.2 717.5H860.1zM860.1 719.0h1.5v4H860.1zM860.1 725.0h7.4L873.1 725.3v1L867.5 728.0H860.1zM860.1 726.8h15.7v0.9H860.1zM860.1 728.0h7.2L870.8 728.8v1L867.3 730.0H860.1zM860.1 730.0h7.6L872.3 730.4v1L867.7 731.5H860.1zM860.1 731.5h2.4v2H860.1zM860.1 733.5h1.1v4H860.1zM860.1 737.5h5.1L867.9 739.0v1L865.2 741.0H860.1zM860.1 741.0h8.6L871.5 742.0v1L868.7 743.5H860.1zM860.1 741.2h13.3v0.9H860.1zM860.1 743.5h9.8L876.9 744.6v1L869.9 746.0H860.1zM860.1 746.0h10.5L873.8 746.4v1L870.6 748.0H860.1zM860.1 748.0h7.9L871.5 748.0v1L868.0 749.0H860.1zM860.1 749.0h2.4v1.5H860.1zM860.1 750.5h6.3L868.9 751.3v1L866.4 754.0H860.1zM860.1 753.1h10.5v0.9H860.1zM860.1 754.0h9.3L873.3 754.8v1L869.4 756.0H860.1zM860.1 754.0h16.4v0.9H860.1zM860.1 756.0h4.7L866.9 757.3v1L864.8 758.5H860.1zM860.1 758.5h9.4L876.9 759.4v1L869.5 760.5H860.1zM860.1 760.5h6.0L867.2 760.4v1L866.1 762.0H860.1zM860.1 763.5h0.8v3H860.1zM860.1 766.5h7.3L870.3 767.0v1L867.4 768.5H860.1zM860.1 768.5h6.9L871.8 768.8v1L867.0 770.0H860.1zM860.1 770.0h1.5v3H860.1z" fill="#000"/>
<rect x="860.1" y="181.8" width="27.6" height="1.8" fill="#0c0c64"/>
<polyline fill="none" stroke="#b83434" stroke-width="1.35" stroke-linejoin="round" points="860.6,4.0 860.6,21.0 864.0,23.5 867.4,25.6 869.0,32.0 867.0,37.0 866.3,40.0 866.0,41.5 867.2,44.5 866.8,46.0 868.4,48.0 868.9,50.0 866.6,53.0 866.5,54.5 866.1,56.5 866.9,59.5 868.6,61.5 868.5,64.5 870.4,66.5 871.3,68.0 870.0,70.0 866.5,72.0 866.9,74.0 870.1,76.0 870.3,78.0 868.5,81.0 869.7,83.5 869.4,85.5 870.2,88.0 870.2,89.5 870.4,92.0 869.8,94.5 868.7,97.5 867.8,100.5 870.7,102.5 870.3,104.0 869.3,106.5 868.7,109.5 867.3,112.0 869.5,115.0 868.7,116.5 867.4,118.5 868.3,120.0 866.7,123.0 866.4,125.5 868.4,128.0 871.0,131.0 872.4,133.5 874.7,136.0 874.0,137.5 872.9,139.5 874.6,141.5 874.3,144.0 876.1,145.5 875.3,148.0 874.7,149.5 875.9,151.5 876.2,153.0 876.4,154.5 877.4,156.0 878.4,157.5 879.4,159.0 881.2,160.5 883.0,162.0 886.0,163.5 888.6,165.0 891.8,166.5 895.5,168.0 899.4,169.5 902.5,171.0 902.8,172.5 902.8,174.0 902.0,175.5 899.6,177.0 896.5,178.5 893.1,180.0 891.2,181.5 888.9,183.0 885.1,184.5 882.9,186.0 881.2,187.5 880.7,189.0 883.0,190.5 885.4,192.0 885.6,193.5 879.9,195.0 875.0,196.5 871.7,198.0 871.4,199.5 870.5,201.0 868.6,203.5 868.7,206.5 869.9,208.5 870.0,210.5 869.3,213.5 868.1,216.5 866.8,219.0 867.4,221.5 868.1,223.0 866.3,224.5 866.2,227.0 868.3,229.5 867.7,232.5 870.6,235.0 868.1,237.5 866.9,239.0 866.7,242.0 867.1,244.5 867.2,247.5 868.7,250.0 868.0,252.5 868.8,255.5 868.7,258.0 867.9,261.0 869.0,263.5 867.9,265.5 869.1,267.5 866.3,270.5 866.6,273.0 865.8,276.0 865.2,278.0 865.2,281.0 865.5,283.5 865.6,286.0 867.4,287.5 868.8,289.5 868.2,291.5 867.3,293.0 868.2,296.0 867.8,298.0 867.5,299.5 868.2,301.5 867.1,303.0 868.0,304.5 868.0,306.5 870.0,308.0 868.0,310.5 868.3,313.5 867.5,315.0 866.5,316.5 868.3,319.0 868.6,321.5 869.9,324.0 868.1,327.0 868.4,330.0 866.7,332.5 868.1,335.5 868.9,338.5 869.5,340.5 868.2,343.0 867.2,344.5 868.1,346.5 866.4,349.0 865.7,352.0 866.2,355.0 867.4,357.5 868.5,360.5 867.9,362.5 867.7,365.0 866.9,367.5 869.7,370.5 868.8,373.0 868.6,376.0 867.8,377.5 866.4,379.0 865.0,381.0 867.1,383.5 867.6,386.5 866.4,388.0 867.3,390.0 867.7,393.0 866.9,395.5 867.2,397.5 866.7,400.5 865.3,403.5 866.5,405.0 867.2,406.5 866.7,409.0 867.2,411.5 867.3,414.0 866.7,416.5 865.6,418.5 868.1,420.0 867.9,421.5 869.5,423.5 868.5,426.5 869.2,429.5 866.8,432.5 866.6,435.5 865.8,438.0 867.1,441.0 867.1,442.5 866.2,445.5 866.3,448.5 867.8,451.0 868.6,454.0 867.0,456.5 867.1,458.0 867.3,459.5 866.7,461.0 867.1,462.5 867.2,465.5 869.0,467.0 868.2,468.5 868.2,470.0 867.3,471.5 869.0,473.5 868.1,476.5 868.1,478.5 868.4,480.5 867.7,482.0 867.4,483.5 867.5,486.5 866.8,488.0 867.6,491.0 867.2,494.0 866.9,495.5 868.6,498.5 868.9,501.0 867.7,502.5 867.5,504.5 867.0,507.0 867.2,509.0 868.7,511.5 867.5,514.0 867.5,516.0 866.6,518.5 867.5,520.5 867.3,522.0 867.1,523.5 868.2,525.0 866.9,528.0 866.4,530.0 867.8,532.5 867.7,534.0 867.4,537.0 868.9,538.5 866.1,541.5 867.0,543.5 866.9,546.5 868.2,548.5 868.9,551.0 867.5,553.0 869.8,555.5 867.3,558.5 868.6,561.0 868.3,563.5 866.8,566.0 866.2,567.5 866.3,569.5 867.3,572.5 867.5,574.5 867.9,576.5 868.8,579.5 869.2,582.0 868.2,585.0 867.3,587.5 867.5,589.5 869.4,591.5 869.1,594.5 867.7,596.5 867.4,598.5 867.4,601.0 867.2,602.5 868.2,605.0 867.4,606.5 866.9,608.0 866.3,610.0 867.2,611.5 866.5,614.5 867.0,616.5 866.7,618.5 865.9,620.0 866.2,623.0 866.7,625.5 866.6,628.0 870.0,630.5 869.8,633.5 868.5,635.5 867.3,637.5 866.8,639.0 866.4,641.5 866.0,643.0 867.1,646.0 868.6,648.0 868.3,650.5 867.6,652.0 866.8,655.0 867.5,656.5 867.4,658.5 865.7,660.0 866.8,661.5 867.7,664.0 866.6,665.5 867.8,667.0 867.4,670.0 867.0,672.0 867.2,674.5 869.8,676.0 869.9,678.0 868.9,679.5 867.5,681.0 866.3,684.0 866.7,687.0 866.8,689.0 865.0,691.5 869.6,694.5 865.8,696.0 866.6,698.0 867.5,700.5 867.3,703.5 867.9,705.0 867.6,708.0 867.9,711.0 867.4,713.0 868.6,715.0 867.4,716.5 865.7,719.0 868.3,720.5 868.5,723.5 869.0,725.0 867.2,727.0 865.6,728.5 867.3,730.0 867.1,731.5 866.6,734.5 866.7,736.5 867.9,738.5 866.7,741.0 867.1,742.5 865.7,744.0 866.3,745.5 868.9,747.0 869.8,749.5 868.0,755.0 868.3,758.5 866.0,765.0 863.5,772.0 861.2,778.0 860.4,780.6"/>
<path d="M860.1 79.50H939.9M860.1 158.50H939.9M860.1 236.50H939.9M860.1 314.50H939.9M860.1 392.50H939.9M860.1 470.50H939.9M860.1 548.50H939.9M860.1 626.50H939.9M860.1 705.50H939.9" stroke="#a4a4a4" stroke-width="1" fill="none"/>
<polyline fill="none" stroke="#2ce22c" stroke-width="1.05" stroke-linejoin="round" points="860.5,4.0 871.6,7.4 875.0,10.0 881.2,12.8 883.5,15.0 885.7,17.3 888.0,19.5 890.0,22.0 892.0,24.5 895.6,26.8 891.5,29.5 890.5,32.0 888.5,34.5 893.0,36.0 893.4,38.0 894.0,40.0 895.4,42.0 897.2,44.0 895.9,46.0 896.0,48.0 896.0,49.9 894.6,51.7 896.3,53.7 899.7,55.6 898.5,59.0 896.5,62.0 899.0,65.0 899.8,67.5 900.5,70.0 901.0,73.0 901.4,75.3 899.6,77.7 900.0,80.0 900.8,82.0 901.5,84.0 902.5,86.1 903.0,88.2 901.0,91.0 900.4,94.0 901.4,96.5 904.0,99.0 903.0,100.0 904.1,102.0 905.7,104.0 908.2,106.5 909.9,109.0 906.1,112.0 907.3,114.0 909.0,116.0 909.9,118.0 910.2,120.3 911.3,122.7 912.8,125.0 912.7,127.0 914.0,129.0 915.4,131.0 915.2,133.0 916.0,135.0 916.9,137.0 916.7,139.0 917.5,141.0 919.8,143.5 921.1,146.0 921.8,148.0 923.9,150.0 925.3,152.5 927.4,155.0 931.0,158.6 936.0,162.0 940.0,165.0"/>
<polyline fill="none" stroke="#2ce22c" stroke-width="1.05" stroke-linejoin="round" points="940.5,182.7 934.0,185.0 927.5,187.8 924.0,191.0 920.0,194.5 916.3,198.0 910.0,201.5 906.0,204.0 902.0,206.2 895.0,208.5 889.7,210.3 888.7,212.4 893.0,214.5 896.9,216.4 892.0,218.0 888.7,219.5 887.7,222.6 884.0,225.0 880.5,227.7 881.5,230.0 880.0,233.0 879.9,235.0 882.1,236.2 879.7,237.7 882.6,238.9 880.9,240.1 882.0,241.6 879.2,242.8 883.1,244.3 880.0,245.8 883.0,247.0 879.3,249.2 881.3,251.0 878.4,252.2 880.8,253.4 878.3,255.6 881.6,257.8 877.9,259.0 881.3,260.5 878.6,261.7 881.0,263.9 877.6,265.1 880.9,266.6 878.6,268.4 883.7,270.2 881.3,271.7 882.9,273.2 880.3,274.4 882.4,275.6 880.5,277.8 882.9,279.3 878.9,280.5 882.6,282.3 880.1,284.5 881.8,286.0 880.9,287.5 882.1,289.0 879.9,290.2 883.4,291.4 880.2,292.9 883.5,294.1 880.4,295.6 883.2,297.8 878.9,299.6 882.0,301.1 879.7,303.3 880.9,305.5 879.0,306.7 882.5,308.2 880.7,310.0 882.1,312.2 879.3,313.7 881.7,315.9 878.1,318.1 882.6,319.3 878.5,321.5 880.8,323.0 878.3,324.8 881.9,326.0 878.9,327.2 882.3,329.4 880.0,330.9 882.8,332.7 880.0,333.9 882.2,335.1 880.0,336.6 881.7,337.8 880.7,339.3 884.5,341.1 881.7,342.6 883.3,344.1 882.1,345.6 883.6,346.8 880.7,348.0 882.6,349.2 881.5,350.7 883.1,352.2 880.5,353.4 882.7,354.9 880.7,356.4 881.5,357.9 879.6,359.1 882.2,360.9 879.5,362.4 881.7,363.9 878.2,365.4 881.5,367.2 878.9,368.4 882.4,370.6 880.5,372.4 882.9,373.9 880.6,375.1 885.1,376.6 880.8,377.8 883.4,379.6 880.9,381.8 883.4,383.6 880.8,385.1 882.8,386.9 880.7,388.4 881.6,389.9 879.5,391.4 883.3,393.2 879.0,395.0 883.3,397.2 879.8,398.7 882.4,400.9 881.1,403.1 883.0,404.6 879.4,405.8 884.0,407.6 880.6,408.8 882.7,410.3 880.4,411.8 882.2,414.0 879.8,415.5 882.9,416.7 879.7,418.2 883.8,419.7 879.0,421.9 883.1,423.4 879.0,424.6 883.4,426.4 878.4,427.9 882.4,429.1 879.0,430.6 882.4,432.1 879.7,433.3 881.4,434.8 878.9,437.0 882.4,438.5 879.7,440.0 882.2,441.5 878.6,442.7 883.3,444.2 880.4,446.4 882.4,448.6 883.2,450.4 885.1,452.2 882.4,453.7 885.0,455.9 880.7,458.1 884.3,459.6 881.4,461.1 882.4,462.3 881.1,463.5 883.4,465.0 881.3,466.5 882.5,468.0 879.6,469.5 881.9,471.0 880.7,472.5 883.4,474.0 881.6,475.2 883.3,476.7 881.9,478.9 885.5,480.4 881.8,481.9 884.3,483.4 880.7,484.9 883.4,487.1 880.9,488.3 883.8,489.8 880.0,491.3 883.5,493.1 880.6,494.6 883.4,496.1 881.3,497.3 884.4,498.8 881.2,500.6 883.5,501.8 880.2,504.0 882.8,505.8 880.3,507.3 882.2,508.8 880.6,510.6 883.5,512.4 879.6,514.6 881.3,516.4 880.1,518.6 882.0,520.4 879.5,521.9 882.8,524.1 878.9,525.9 881.8,528.1 877.9,529.6 882.1,531.8 878.6,534.0 882.6,536.2 881.9,538.4 882.7,539.9 880.5,541.4 883.4,542.9 881.6,544.4 883.1,545.6 880.8,547.4 883.4,549.2 880.7,550.4 883.7,551.6 880.6,552.8 884.3,554.0 882.2,555.5 882.9,556.7 882.1,557.9 884.1,559.4 880.8,560.9 882.4,562.7 879.5,564.2 882.1,565.7 879.2,566.9 884.5,568.4 881.0,570.6 882.5,572.8 879.4,575.0 882.5,576.5 880.5,578.0 882.3,579.2 880.7,581.4 882.9,583.2 879.7,584.4 882.0,585.9 880.5,587.4 881.1,588.6 879.9,590.8 884.0,592.3 881.2,594.1 884.9,596.3 881.0,597.5 883.3,599.0 880.4,601.2 884.3,603.4 880.7,604.9 884.2,607.1 880.0,609.3 882.1,610.8 879.0,612.3 880.6,613.8 879.9,615.6 881.3,616.8 878.6,618.3 882.0,619.5 880.1,621.0 880.9,622.2 877.8,623.4 881.5,624.9 879.5,626.1 880.4,627.6 879.3,628.8 882.0,630.3 880.5,631.8 881.3,634.0 880.4,635.2 882.7,636.7 879.4,638.9 881.0,641.1 879.3,642.9 882.2,644.1 880.7,645.6 883.3,647.1 880.9,648.6 883.3,649.8 881.2,651.0 882.6,653.2 880.8,655.0 884.4,656.5 882.3,658.7 884.5,659.9 881.7,661.4 883.6,663.2 879.2,665.0 882.0,666.2 879.7,667.7 881.2,668.9 877.5,670.7 880.8,672.5 879.6,674.3 882.4,676.1 879.1,678.3 882.5,679.8 880.3,681.0 882.2,683.2 878.2,684.4 880.8,685.9 879.3,687.7 882.4,689.5 879.0,691.3 882.5,692.8 879.3,694.3 882.7,695.8 879.4,697.0 882.1,698.5 879.5,700.0 882.1,702.2 879.4,703.7 882.4,705.5 881.4,707.0 883.7,708.5 878.7,710.0 881.2,711.2 879.2,712.4 881.1,713.9 878.1,715.7 880.9,717.5 878.9,719.0 880.5,720.5 879.6,722.0 881.6,723.5 880.8,725.7 883.1,727.2 880.0,728.4 881.1,729.9 879.9,731.1 881.1,733.3 879.1,734.5 881.5,736.7 877.9,737.9 880.7,739.1 880.8,740.3 882.3,742.5 881.0,744.7 883.3,746.9 880.4,748.1 883.3,749.3 881.1,750.5 882.0,754.0 880.5,757.0 882.5,760.0 881.3,764.0 879.0,767.5 876.7,770.6 873.0,773.0 870.3,775.0 865.0,778.0 861.2,780.6"/>
<circle cx="924.5" cy="298.4" r="2.6" fill="#000" stroke="#c81e1e" stroke-width="1.1"/>
<polyline fill="none" stroke="#52d452" stroke-width="1" points="936,781.5 936.8,779.6 938.2,778.6 940,778.2"/>
</svg></body></html>
